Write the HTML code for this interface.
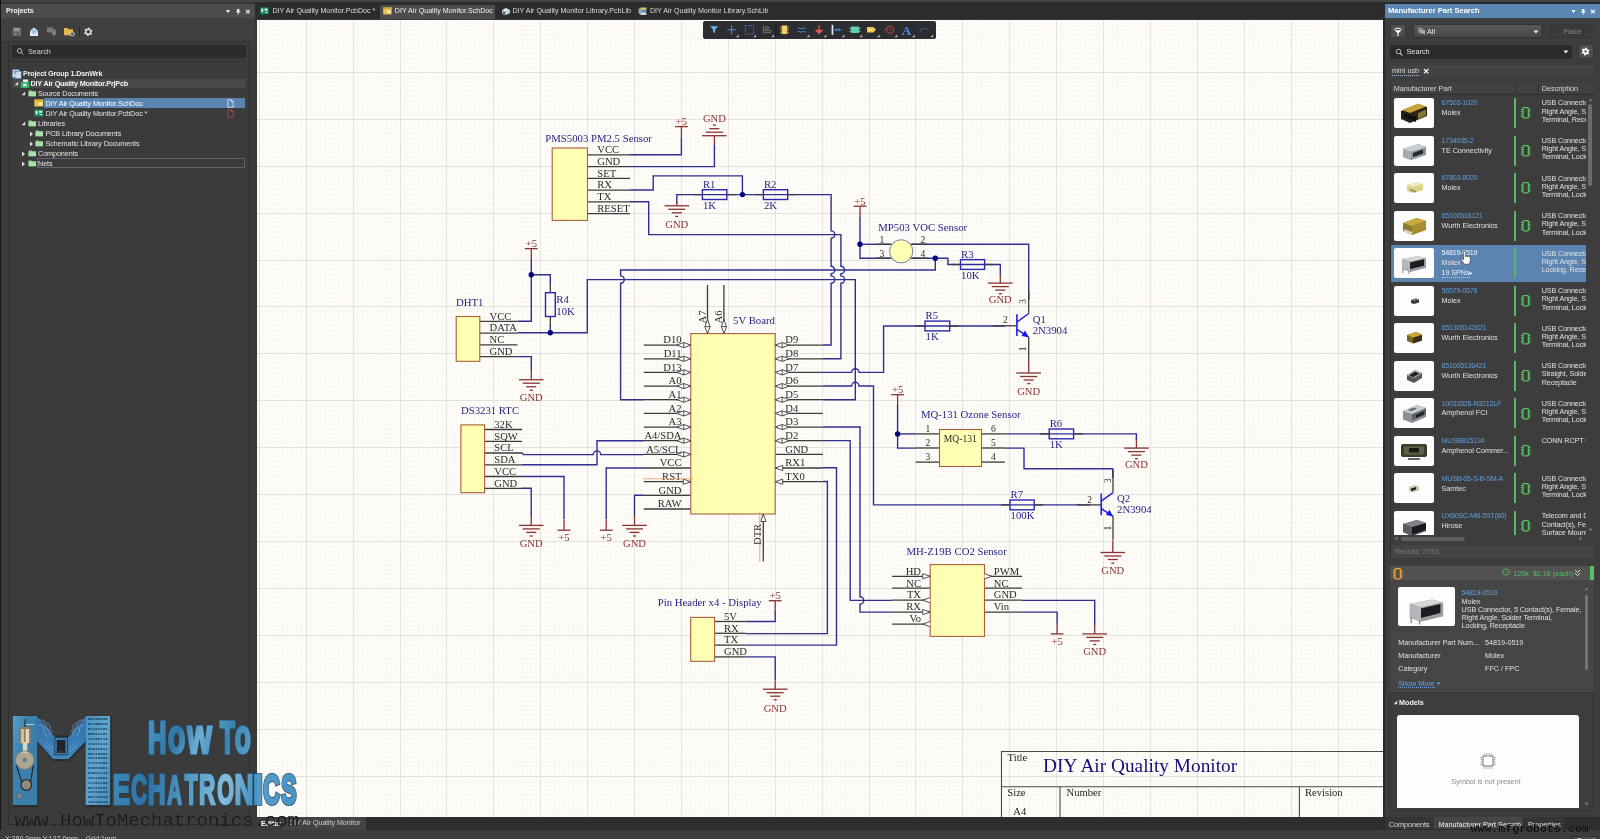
<!DOCTYPE html><html><head><meta charset="utf-8"><title>Altium</title><style>
*{box-sizing:border-box;margin:0;padding:0}
html,body{width:1600px;height:839px;overflow:hidden;background:#2d2d2d}
body{position:relative;will-change:transform;font-family:"Liberation Sans",sans-serif;font-size:7px;color:#ddd}
.a{position:absolute}
.t{position:absolute;white-space:nowrap;line-height:1}
svg{position:absolute;overflow:visible}
.sch text{font-family:"Liberation Serif",serif}
.sans text{font-family:"Liberation Sans",sans-serif}

.lp{left:1px;top:4px;width:253px;height:826px;background:#3b3b3b}
.lph{left:1px;top:4px;width:254px;height:14.3px;background:#4d4d4d}
.tr{font-size:7.25px;color:#e4e4e4;letter-spacing:-0.1px}
.tab{font-size:7.1px;color:#dcdcdc}

.rp{left:1384.5px;top:4px;width:215.5px;height:813px;background:#3d3d3d}
.rph{left:1384.5px;top:4px;width:215.5px;height:13.8px;background:#5b86b2}
.pn{font-size:7.2px;color:#5f9fe0;letter-spacing:-0.27px}
.mf{font-size:7.2px;color:#e2e2e2}
.ds{font-size:7.2px;letter-spacing:-0.1px;color:#e2e2e2;line-height:8.3px;white-space:nowrap;position:absolute}
</style></head><body>
<div class="a" style="left:0;top:0;width:1600px;height:4px;background:#2c2c2c"></div><div class="a" style="left:0;top:0;width:1600px;height:1.8px;background:#444"></div><div class="a" style="left:0;top:1.8px;width:255px;height:2.4px;background:#363636"></div>
<div class="a" style="left:0;top:0;width:1.2px;height:839px;background:#141414"></div>
<div class="a" style="left:257px;top:19px;width:1126px;height:798px;background:#fefcf8;overflow:hidden">
<svg class="sch" style="left:-257px;top:-19px" width="1600" height="839" viewBox="0 0 1600 839">
<line x1="259.50" y1="19" x2="259.50" y2="817" stroke="#e4e0da" stroke-width="1"/>
<line x1="264.04" y1="19" x2="264.04" y2="817" stroke="#f8f5f0" stroke-width="0.5"/>
<line x1="268.73" y1="19" x2="268.73" y2="817" stroke="#f8f5f0" stroke-width="0.5"/>
<line x1="273.42" y1="19" x2="273.42" y2="817" stroke="#f8f5f0" stroke-width="0.5"/>
<line x1="278.11" y1="19" x2="278.11" y2="817" stroke="#f8f5f0" stroke-width="0.5"/>
<line x1="282.80" y1="19" x2="282.80" y2="817" stroke="#f8f5f0" stroke-width="0.5"/>
<line x1="287.49" y1="19" x2="287.49" y2="817" stroke="#f8f5f0" stroke-width="0.5"/>
<line x1="292.18" y1="19" x2="292.18" y2="817" stroke="#f8f5f0" stroke-width="0.5"/>
<line x1="296.87" y1="19" x2="296.87" y2="817" stroke="#f8f5f0" stroke-width="0.5"/>
<line x1="301.56" y1="19" x2="301.56" y2="817" stroke="#f8f5f0" stroke-width="0.5"/>
<line x1="306.50" y1="19" x2="306.50" y2="817" stroke="#e4e0da" stroke-width="1"/>
<line x1="310.94" y1="19" x2="310.94" y2="817" stroke="#f8f5f0" stroke-width="0.5"/>
<line x1="315.63" y1="19" x2="315.63" y2="817" stroke="#f8f5f0" stroke-width="0.5"/>
<line x1="320.32" y1="19" x2="320.32" y2="817" stroke="#f8f5f0" stroke-width="0.5"/>
<line x1="325.01" y1="19" x2="325.01" y2="817" stroke="#f8f5f0" stroke-width="0.5"/>
<line x1="329.70" y1="19" x2="329.70" y2="817" stroke="#f8f5f0" stroke-width="0.5"/>
<line x1="334.39" y1="19" x2="334.39" y2="817" stroke="#f8f5f0" stroke-width="0.5"/>
<line x1="339.08" y1="19" x2="339.08" y2="817" stroke="#f8f5f0" stroke-width="0.5"/>
<line x1="343.77" y1="19" x2="343.77" y2="817" stroke="#f8f5f0" stroke-width="0.5"/>
<line x1="348.46" y1="19" x2="348.46" y2="817" stroke="#f8f5f0" stroke-width="0.5"/>
<line x1="353.50" y1="19" x2="353.50" y2="817" stroke="#e4e0da" stroke-width="1"/>
<line x1="357.84" y1="19" x2="357.84" y2="817" stroke="#f8f5f0" stroke-width="0.5"/>
<line x1="362.53" y1="19" x2="362.53" y2="817" stroke="#f8f5f0" stroke-width="0.5"/>
<line x1="367.22" y1="19" x2="367.22" y2="817" stroke="#f8f5f0" stroke-width="0.5"/>
<line x1="371.91" y1="19" x2="371.91" y2="817" stroke="#f8f5f0" stroke-width="0.5"/>
<line x1="376.60" y1="19" x2="376.60" y2="817" stroke="#f8f5f0" stroke-width="0.5"/>
<line x1="381.29" y1="19" x2="381.29" y2="817" stroke="#f8f5f0" stroke-width="0.5"/>
<line x1="385.98" y1="19" x2="385.98" y2="817" stroke="#f8f5f0" stroke-width="0.5"/>
<line x1="390.67" y1="19" x2="390.67" y2="817" stroke="#f8f5f0" stroke-width="0.5"/>
<line x1="395.36" y1="19" x2="395.36" y2="817" stroke="#f8f5f0" stroke-width="0.5"/>
<line x1="400.50" y1="19" x2="400.50" y2="817" stroke="#e4e0da" stroke-width="1"/>
<line x1="404.74" y1="19" x2="404.74" y2="817" stroke="#f8f5f0" stroke-width="0.5"/>
<line x1="409.43" y1="19" x2="409.43" y2="817" stroke="#f8f5f0" stroke-width="0.5"/>
<line x1="414.12" y1="19" x2="414.12" y2="817" stroke="#f8f5f0" stroke-width="0.5"/>
<line x1="418.81" y1="19" x2="418.81" y2="817" stroke="#f8f5f0" stroke-width="0.5"/>
<line x1="423.50" y1="19" x2="423.50" y2="817" stroke="#f8f5f0" stroke-width="0.5"/>
<line x1="428.19" y1="19" x2="428.19" y2="817" stroke="#f8f5f0" stroke-width="0.5"/>
<line x1="432.88" y1="19" x2="432.88" y2="817" stroke="#f8f5f0" stroke-width="0.5"/>
<line x1="437.57" y1="19" x2="437.57" y2="817" stroke="#f8f5f0" stroke-width="0.5"/>
<line x1="442.26" y1="19" x2="442.26" y2="817" stroke="#f8f5f0" stroke-width="0.5"/>
<line x1="446.50" y1="19" x2="446.50" y2="817" stroke="#e4e0da" stroke-width="1"/>
<line x1="451.64" y1="19" x2="451.64" y2="817" stroke="#f8f5f0" stroke-width="0.5"/>
<line x1="456.33" y1="19" x2="456.33" y2="817" stroke="#f8f5f0" stroke-width="0.5"/>
<line x1="461.02" y1="19" x2="461.02" y2="817" stroke="#f8f5f0" stroke-width="0.5"/>
<line x1="465.71" y1="19" x2="465.71" y2="817" stroke="#f8f5f0" stroke-width="0.5"/>
<line x1="470.40" y1="19" x2="470.40" y2="817" stroke="#f8f5f0" stroke-width="0.5"/>
<line x1="475.09" y1="19" x2="475.09" y2="817" stroke="#f8f5f0" stroke-width="0.5"/>
<line x1="479.78" y1="19" x2="479.78" y2="817" stroke="#f8f5f0" stroke-width="0.5"/>
<line x1="484.47" y1="19" x2="484.47" y2="817" stroke="#f8f5f0" stroke-width="0.5"/>
<line x1="489.16" y1="19" x2="489.16" y2="817" stroke="#f8f5f0" stroke-width="0.5"/>
<line x1="493.50" y1="19" x2="493.50" y2="817" stroke="#e4e0da" stroke-width="1"/>
<line x1="498.54" y1="19" x2="498.54" y2="817" stroke="#f8f5f0" stroke-width="0.5"/>
<line x1="503.23" y1="19" x2="503.23" y2="817" stroke="#f8f5f0" stroke-width="0.5"/>
<line x1="507.92" y1="19" x2="507.92" y2="817" stroke="#f8f5f0" stroke-width="0.5"/>
<line x1="512.61" y1="19" x2="512.61" y2="817" stroke="#f8f5f0" stroke-width="0.5"/>
<line x1="517.30" y1="19" x2="517.30" y2="817" stroke="#f8f5f0" stroke-width="0.5"/>
<line x1="521.99" y1="19" x2="521.99" y2="817" stroke="#f8f5f0" stroke-width="0.5"/>
<line x1="526.68" y1="19" x2="526.68" y2="817" stroke="#f8f5f0" stroke-width="0.5"/>
<line x1="531.37" y1="19" x2="531.37" y2="817" stroke="#f8f5f0" stroke-width="0.5"/>
<line x1="536.06" y1="19" x2="536.06" y2="817" stroke="#f8f5f0" stroke-width="0.5"/>
<line x1="540.50" y1="19" x2="540.50" y2="817" stroke="#e4e0da" stroke-width="1"/>
<line x1="545.44" y1="19" x2="545.44" y2="817" stroke="#f8f5f0" stroke-width="0.5"/>
<line x1="550.13" y1="19" x2="550.13" y2="817" stroke="#f8f5f0" stroke-width="0.5"/>
<line x1="554.82" y1="19" x2="554.82" y2="817" stroke="#f8f5f0" stroke-width="0.5"/>
<line x1="559.51" y1="19" x2="559.51" y2="817" stroke="#f8f5f0" stroke-width="0.5"/>
<line x1="564.20" y1="19" x2="564.20" y2="817" stroke="#f8f5f0" stroke-width="0.5"/>
<line x1="568.89" y1="19" x2="568.89" y2="817" stroke="#f8f5f0" stroke-width="0.5"/>
<line x1="573.58" y1="19" x2="573.58" y2="817" stroke="#f8f5f0" stroke-width="0.5"/>
<line x1="578.27" y1="19" x2="578.27" y2="817" stroke="#f8f5f0" stroke-width="0.5"/>
<line x1="582.96" y1="19" x2="582.96" y2="817" stroke="#f8f5f0" stroke-width="0.5"/>
<line x1="587.50" y1="19" x2="587.50" y2="817" stroke="#e4e0da" stroke-width="1"/>
<line x1="592.34" y1="19" x2="592.34" y2="817" stroke="#f8f5f0" stroke-width="0.5"/>
<line x1="597.03" y1="19" x2="597.03" y2="817" stroke="#f8f5f0" stroke-width="0.5"/>
<line x1="601.72" y1="19" x2="601.72" y2="817" stroke="#f8f5f0" stroke-width="0.5"/>
<line x1="606.41" y1="19" x2="606.41" y2="817" stroke="#f8f5f0" stroke-width="0.5"/>
<line x1="611.10" y1="19" x2="611.10" y2="817" stroke="#f8f5f0" stroke-width="0.5"/>
<line x1="615.79" y1="19" x2="615.79" y2="817" stroke="#f8f5f0" stroke-width="0.5"/>
<line x1="620.48" y1="19" x2="620.48" y2="817" stroke="#f8f5f0" stroke-width="0.5"/>
<line x1="625.17" y1="19" x2="625.17" y2="817" stroke="#f8f5f0" stroke-width="0.5"/>
<line x1="629.86" y1="19" x2="629.86" y2="817" stroke="#f8f5f0" stroke-width="0.5"/>
<line x1="634.50" y1="19" x2="634.50" y2="817" stroke="#e4e0da" stroke-width="1"/>
<line x1="639.24" y1="19" x2="639.24" y2="817" stroke="#f8f5f0" stroke-width="0.5"/>
<line x1="643.93" y1="19" x2="643.93" y2="817" stroke="#f8f5f0" stroke-width="0.5"/>
<line x1="648.62" y1="19" x2="648.62" y2="817" stroke="#f8f5f0" stroke-width="0.5"/>
<line x1="653.31" y1="19" x2="653.31" y2="817" stroke="#f8f5f0" stroke-width="0.5"/>
<line x1="658.00" y1="19" x2="658.00" y2="817" stroke="#f8f5f0" stroke-width="0.5"/>
<line x1="662.69" y1="19" x2="662.69" y2="817" stroke="#f8f5f0" stroke-width="0.5"/>
<line x1="667.38" y1="19" x2="667.38" y2="817" stroke="#f8f5f0" stroke-width="0.5"/>
<line x1="672.07" y1="19" x2="672.07" y2="817" stroke="#f8f5f0" stroke-width="0.5"/>
<line x1="676.76" y1="19" x2="676.76" y2="817" stroke="#f8f5f0" stroke-width="0.5"/>
<line x1="681.50" y1="19" x2="681.50" y2="817" stroke="#e4e0da" stroke-width="1"/>
<line x1="686.14" y1="19" x2="686.14" y2="817" stroke="#f8f5f0" stroke-width="0.5"/>
<line x1="690.83" y1="19" x2="690.83" y2="817" stroke="#f8f5f0" stroke-width="0.5"/>
<line x1="695.52" y1="19" x2="695.52" y2="817" stroke="#f8f5f0" stroke-width="0.5"/>
<line x1="700.21" y1="19" x2="700.21" y2="817" stroke="#f8f5f0" stroke-width="0.5"/>
<line x1="704.90" y1="19" x2="704.90" y2="817" stroke="#f8f5f0" stroke-width="0.5"/>
<line x1="709.59" y1="19" x2="709.59" y2="817" stroke="#f8f5f0" stroke-width="0.5"/>
<line x1="714.28" y1="19" x2="714.28" y2="817" stroke="#f8f5f0" stroke-width="0.5"/>
<line x1="718.97" y1="19" x2="718.97" y2="817" stroke="#f8f5f0" stroke-width="0.5"/>
<line x1="723.66" y1="19" x2="723.66" y2="817" stroke="#f8f5f0" stroke-width="0.5"/>
<line x1="728.50" y1="19" x2="728.50" y2="817" stroke="#e4e0da" stroke-width="1"/>
<line x1="733.04" y1="19" x2="733.04" y2="817" stroke="#f8f5f0" stroke-width="0.5"/>
<line x1="737.73" y1="19" x2="737.73" y2="817" stroke="#f8f5f0" stroke-width="0.5"/>
<line x1="742.42" y1="19" x2="742.42" y2="817" stroke="#f8f5f0" stroke-width="0.5"/>
<line x1="747.11" y1="19" x2="747.11" y2="817" stroke="#f8f5f0" stroke-width="0.5"/>
<line x1="751.80" y1="19" x2="751.80" y2="817" stroke="#f8f5f0" stroke-width="0.5"/>
<line x1="756.49" y1="19" x2="756.49" y2="817" stroke="#f8f5f0" stroke-width="0.5"/>
<line x1="761.18" y1="19" x2="761.18" y2="817" stroke="#f8f5f0" stroke-width="0.5"/>
<line x1="765.87" y1="19" x2="765.87" y2="817" stroke="#f8f5f0" stroke-width="0.5"/>
<line x1="770.56" y1="19" x2="770.56" y2="817" stroke="#f8f5f0" stroke-width="0.5"/>
<line x1="775.50" y1="19" x2="775.50" y2="817" stroke="#e4e0da" stroke-width="1"/>
<line x1="779.94" y1="19" x2="779.94" y2="817" stroke="#f8f5f0" stroke-width="0.5"/>
<line x1="784.63" y1="19" x2="784.63" y2="817" stroke="#f8f5f0" stroke-width="0.5"/>
<line x1="789.32" y1="19" x2="789.32" y2="817" stroke="#f8f5f0" stroke-width="0.5"/>
<line x1="794.01" y1="19" x2="794.01" y2="817" stroke="#f8f5f0" stroke-width="0.5"/>
<line x1="798.70" y1="19" x2="798.70" y2="817" stroke="#f8f5f0" stroke-width="0.5"/>
<line x1="803.39" y1="19" x2="803.39" y2="817" stroke="#f8f5f0" stroke-width="0.5"/>
<line x1="808.08" y1="19" x2="808.08" y2="817" stroke="#f8f5f0" stroke-width="0.5"/>
<line x1="812.77" y1="19" x2="812.77" y2="817" stroke="#f8f5f0" stroke-width="0.5"/>
<line x1="817.46" y1="19" x2="817.46" y2="817" stroke="#f8f5f0" stroke-width="0.5"/>
<line x1="822.50" y1="19" x2="822.50" y2="817" stroke="#e4e0da" stroke-width="1"/>
<line x1="826.84" y1="19" x2="826.84" y2="817" stroke="#f8f5f0" stroke-width="0.5"/>
<line x1="831.53" y1="19" x2="831.53" y2="817" stroke="#f8f5f0" stroke-width="0.5"/>
<line x1="836.22" y1="19" x2="836.22" y2="817" stroke="#f8f5f0" stroke-width="0.5"/>
<line x1="840.91" y1="19" x2="840.91" y2="817" stroke="#f8f5f0" stroke-width="0.5"/>
<line x1="845.60" y1="19" x2="845.60" y2="817" stroke="#f8f5f0" stroke-width="0.5"/>
<line x1="850.29" y1="19" x2="850.29" y2="817" stroke="#f8f5f0" stroke-width="0.5"/>
<line x1="854.98" y1="19" x2="854.98" y2="817" stroke="#f8f5f0" stroke-width="0.5"/>
<line x1="859.67" y1="19" x2="859.67" y2="817" stroke="#f8f5f0" stroke-width="0.5"/>
<line x1="864.36" y1="19" x2="864.36" y2="817" stroke="#f8f5f0" stroke-width="0.5"/>
<line x1="869.50" y1="19" x2="869.50" y2="817" stroke="#e4e0da" stroke-width="1"/>
<line x1="873.74" y1="19" x2="873.74" y2="817" stroke="#f8f5f0" stroke-width="0.5"/>
<line x1="878.43" y1="19" x2="878.43" y2="817" stroke="#f8f5f0" stroke-width="0.5"/>
<line x1="883.12" y1="19" x2="883.12" y2="817" stroke="#f8f5f0" stroke-width="0.5"/>
<line x1="887.81" y1="19" x2="887.81" y2="817" stroke="#f8f5f0" stroke-width="0.5"/>
<line x1="892.50" y1="19" x2="892.50" y2="817" stroke="#f8f5f0" stroke-width="0.5"/>
<line x1="897.19" y1="19" x2="897.19" y2="817" stroke="#f8f5f0" stroke-width="0.5"/>
<line x1="901.88" y1="19" x2="901.88" y2="817" stroke="#f8f5f0" stroke-width="0.5"/>
<line x1="906.57" y1="19" x2="906.57" y2="817" stroke="#f8f5f0" stroke-width="0.5"/>
<line x1="911.26" y1="19" x2="911.26" y2="817" stroke="#f8f5f0" stroke-width="0.5"/>
<line x1="915.50" y1="19" x2="915.50" y2="817" stroke="#e4e0da" stroke-width="1"/>
<line x1="920.64" y1="19" x2="920.64" y2="817" stroke="#f8f5f0" stroke-width="0.5"/>
<line x1="925.33" y1="19" x2="925.33" y2="817" stroke="#f8f5f0" stroke-width="0.5"/>
<line x1="930.02" y1="19" x2="930.02" y2="817" stroke="#f8f5f0" stroke-width="0.5"/>
<line x1="934.71" y1="19" x2="934.71" y2="817" stroke="#f8f5f0" stroke-width="0.5"/>
<line x1="939.40" y1="19" x2="939.40" y2="817" stroke="#f8f5f0" stroke-width="0.5"/>
<line x1="944.09" y1="19" x2="944.09" y2="817" stroke="#f8f5f0" stroke-width="0.5"/>
<line x1="948.78" y1="19" x2="948.78" y2="817" stroke="#f8f5f0" stroke-width="0.5"/>
<line x1="953.47" y1="19" x2="953.47" y2="817" stroke="#f8f5f0" stroke-width="0.5"/>
<line x1="958.16" y1="19" x2="958.16" y2="817" stroke="#f8f5f0" stroke-width="0.5"/>
<line x1="962.50" y1="19" x2="962.50" y2="817" stroke="#e4e0da" stroke-width="1"/>
<line x1="967.54" y1="19" x2="967.54" y2="817" stroke="#f8f5f0" stroke-width="0.5"/>
<line x1="972.23" y1="19" x2="972.23" y2="817" stroke="#f8f5f0" stroke-width="0.5"/>
<line x1="976.92" y1="19" x2="976.92" y2="817" stroke="#f8f5f0" stroke-width="0.5"/>
<line x1="981.61" y1="19" x2="981.61" y2="817" stroke="#f8f5f0" stroke-width="0.5"/>
<line x1="986.30" y1="19" x2="986.30" y2="817" stroke="#f8f5f0" stroke-width="0.5"/>
<line x1="990.99" y1="19" x2="990.99" y2="817" stroke="#f8f5f0" stroke-width="0.5"/>
<line x1="995.68" y1="19" x2="995.68" y2="817" stroke="#f8f5f0" stroke-width="0.5"/>
<line x1="1000.37" y1="19" x2="1000.37" y2="817" stroke="#f8f5f0" stroke-width="0.5"/>
<line x1="1005.06" y1="19" x2="1005.06" y2="817" stroke="#f8f5f0" stroke-width="0.5"/>
<line x1="1009.50" y1="19" x2="1009.50" y2="817" stroke="#e4e0da" stroke-width="1"/>
<line x1="1014.44" y1="19" x2="1014.44" y2="817" stroke="#f8f5f0" stroke-width="0.5"/>
<line x1="1019.13" y1="19" x2="1019.13" y2="817" stroke="#f8f5f0" stroke-width="0.5"/>
<line x1="1023.82" y1="19" x2="1023.82" y2="817" stroke="#f8f5f0" stroke-width="0.5"/>
<line x1="1028.51" y1="19" x2="1028.51" y2="817" stroke="#f8f5f0" stroke-width="0.5"/>
<line x1="1033.20" y1="19" x2="1033.20" y2="817" stroke="#f8f5f0" stroke-width="0.5"/>
<line x1="1037.89" y1="19" x2="1037.89" y2="817" stroke="#f8f5f0" stroke-width="0.5"/>
<line x1="1042.58" y1="19" x2="1042.58" y2="817" stroke="#f8f5f0" stroke-width="0.5"/>
<line x1="1047.27" y1="19" x2="1047.27" y2="817" stroke="#f8f5f0" stroke-width="0.5"/>
<line x1="1051.96" y1="19" x2="1051.96" y2="817" stroke="#f8f5f0" stroke-width="0.5"/>
<line x1="1056.50" y1="19" x2="1056.50" y2="817" stroke="#e4e0da" stroke-width="1"/>
<line x1="1061.34" y1="19" x2="1061.34" y2="817" stroke="#f8f5f0" stroke-width="0.5"/>
<line x1="1066.03" y1="19" x2="1066.03" y2="817" stroke="#f8f5f0" stroke-width="0.5"/>
<line x1="1070.72" y1="19" x2="1070.72" y2="817" stroke="#f8f5f0" stroke-width="0.5"/>
<line x1="1075.41" y1="19" x2="1075.41" y2="817" stroke="#f8f5f0" stroke-width="0.5"/>
<line x1="1080.10" y1="19" x2="1080.10" y2="817" stroke="#f8f5f0" stroke-width="0.5"/>
<line x1="1084.79" y1="19" x2="1084.79" y2="817" stroke="#f8f5f0" stroke-width="0.5"/>
<line x1="1089.48" y1="19" x2="1089.48" y2="817" stroke="#f8f5f0" stroke-width="0.5"/>
<line x1="1094.17" y1="19" x2="1094.17" y2="817" stroke="#f8f5f0" stroke-width="0.5"/>
<line x1="1098.86" y1="19" x2="1098.86" y2="817" stroke="#f8f5f0" stroke-width="0.5"/>
<line x1="1103.50" y1="19" x2="1103.50" y2="817" stroke="#e4e0da" stroke-width="1"/>
<line x1="1108.24" y1="19" x2="1108.24" y2="817" stroke="#f8f5f0" stroke-width="0.5"/>
<line x1="1112.93" y1="19" x2="1112.93" y2="817" stroke="#f8f5f0" stroke-width="0.5"/>
<line x1="1117.62" y1="19" x2="1117.62" y2="817" stroke="#f8f5f0" stroke-width="0.5"/>
<line x1="1122.31" y1="19" x2="1122.31" y2="817" stroke="#f8f5f0" stroke-width="0.5"/>
<line x1="1127.00" y1="19" x2="1127.00" y2="817" stroke="#f8f5f0" stroke-width="0.5"/>
<line x1="1131.69" y1="19" x2="1131.69" y2="817" stroke="#f8f5f0" stroke-width="0.5"/>
<line x1="1136.38" y1="19" x2="1136.38" y2="817" stroke="#f8f5f0" stroke-width="0.5"/>
<line x1="1141.07" y1="19" x2="1141.07" y2="817" stroke="#f8f5f0" stroke-width="0.5"/>
<line x1="1145.76" y1="19" x2="1145.76" y2="817" stroke="#f8f5f0" stroke-width="0.5"/>
<line x1="1150.50" y1="19" x2="1150.50" y2="817" stroke="#e4e0da" stroke-width="1"/>
<line x1="1155.14" y1="19" x2="1155.14" y2="817" stroke="#f8f5f0" stroke-width="0.5"/>
<line x1="1159.83" y1="19" x2="1159.83" y2="817" stroke="#f8f5f0" stroke-width="0.5"/>
<line x1="1164.52" y1="19" x2="1164.52" y2="817" stroke="#f8f5f0" stroke-width="0.5"/>
<line x1="1169.21" y1="19" x2="1169.21" y2="817" stroke="#f8f5f0" stroke-width="0.5"/>
<line x1="1173.90" y1="19" x2="1173.90" y2="817" stroke="#f8f5f0" stroke-width="0.5"/>
<line x1="1178.59" y1="19" x2="1178.59" y2="817" stroke="#f8f5f0" stroke-width="0.5"/>
<line x1="1183.28" y1="19" x2="1183.28" y2="817" stroke="#f8f5f0" stroke-width="0.5"/>
<line x1="1187.97" y1="19" x2="1187.97" y2="817" stroke="#f8f5f0" stroke-width="0.5"/>
<line x1="1192.66" y1="19" x2="1192.66" y2="817" stroke="#f8f5f0" stroke-width="0.5"/>
<line x1="1197.50" y1="19" x2="1197.50" y2="817" stroke="#e4e0da" stroke-width="1"/>
<line x1="1202.04" y1="19" x2="1202.04" y2="817" stroke="#f8f5f0" stroke-width="0.5"/>
<line x1="1206.73" y1="19" x2="1206.73" y2="817" stroke="#f8f5f0" stroke-width="0.5"/>
<line x1="1211.42" y1="19" x2="1211.42" y2="817" stroke="#f8f5f0" stroke-width="0.5"/>
<line x1="1216.11" y1="19" x2="1216.11" y2="817" stroke="#f8f5f0" stroke-width="0.5"/>
<line x1="1220.80" y1="19" x2="1220.80" y2="817" stroke="#f8f5f0" stroke-width="0.5"/>
<line x1="1225.49" y1="19" x2="1225.49" y2="817" stroke="#f8f5f0" stroke-width="0.5"/>
<line x1="1230.18" y1="19" x2="1230.18" y2="817" stroke="#f8f5f0" stroke-width="0.5"/>
<line x1="1234.87" y1="19" x2="1234.87" y2="817" stroke="#f8f5f0" stroke-width="0.5"/>
<line x1="1239.56" y1="19" x2="1239.56" y2="817" stroke="#f8f5f0" stroke-width="0.5"/>
<line x1="1244.50" y1="19" x2="1244.50" y2="817" stroke="#e4e0da" stroke-width="1"/>
<line x1="1248.94" y1="19" x2="1248.94" y2="817" stroke="#f8f5f0" stroke-width="0.5"/>
<line x1="1253.63" y1="19" x2="1253.63" y2="817" stroke="#f8f5f0" stroke-width="0.5"/>
<line x1="1258.32" y1="19" x2="1258.32" y2="817" stroke="#f8f5f0" stroke-width="0.5"/>
<line x1="1263.01" y1="19" x2="1263.01" y2="817" stroke="#f8f5f0" stroke-width="0.5"/>
<line x1="1267.70" y1="19" x2="1267.70" y2="817" stroke="#f8f5f0" stroke-width="0.5"/>
<line x1="1272.39" y1="19" x2="1272.39" y2="817" stroke="#f8f5f0" stroke-width="0.5"/>
<line x1="1277.08" y1="19" x2="1277.08" y2="817" stroke="#f8f5f0" stroke-width="0.5"/>
<line x1="1281.77" y1="19" x2="1281.77" y2="817" stroke="#f8f5f0" stroke-width="0.5"/>
<line x1="1286.46" y1="19" x2="1286.46" y2="817" stroke="#f8f5f0" stroke-width="0.5"/>
<line x1="1291.50" y1="19" x2="1291.50" y2="817" stroke="#e4e0da" stroke-width="1"/>
<line x1="1295.84" y1="19" x2="1295.84" y2="817" stroke="#f8f5f0" stroke-width="0.5"/>
<line x1="1300.53" y1="19" x2="1300.53" y2="817" stroke="#f8f5f0" stroke-width="0.5"/>
<line x1="1305.22" y1="19" x2="1305.22" y2="817" stroke="#f8f5f0" stroke-width="0.5"/>
<line x1="1309.91" y1="19" x2="1309.91" y2="817" stroke="#f8f5f0" stroke-width="0.5"/>
<line x1="1314.60" y1="19" x2="1314.60" y2="817" stroke="#f8f5f0" stroke-width="0.5"/>
<line x1="1319.29" y1="19" x2="1319.29" y2="817" stroke="#f8f5f0" stroke-width="0.5"/>
<line x1="1323.98" y1="19" x2="1323.98" y2="817" stroke="#f8f5f0" stroke-width="0.5"/>
<line x1="1328.67" y1="19" x2="1328.67" y2="817" stroke="#f8f5f0" stroke-width="0.5"/>
<line x1="1333.36" y1="19" x2="1333.36" y2="817" stroke="#f8f5f0" stroke-width="0.5"/>
<line x1="1338.50" y1="19" x2="1338.50" y2="817" stroke="#e4e0da" stroke-width="1"/>
<line x1="1342.74" y1="19" x2="1342.74" y2="817" stroke="#f8f5f0" stroke-width="0.5"/>
<line x1="1347.43" y1="19" x2="1347.43" y2="817" stroke="#f8f5f0" stroke-width="0.5"/>
<line x1="1352.12" y1="19" x2="1352.12" y2="817" stroke="#f8f5f0" stroke-width="0.5"/>
<line x1="1356.81" y1="19" x2="1356.81" y2="817" stroke="#f8f5f0" stroke-width="0.5"/>
<line x1="1361.50" y1="19" x2="1361.50" y2="817" stroke="#f8f5f0" stroke-width="0.5"/>
<line x1="1366.19" y1="19" x2="1366.19" y2="817" stroke="#f8f5f0" stroke-width="0.5"/>
<line x1="1370.88" y1="19" x2="1370.88" y2="817" stroke="#f8f5f0" stroke-width="0.5"/>
<line x1="1375.57" y1="19" x2="1375.57" y2="817" stroke="#f8f5f0" stroke-width="0.5"/>
<line x1="1380.26" y1="19" x2="1380.26" y2="817" stroke="#f8f5f0" stroke-width="0.5"/>
<line x1="257" y1="20.91" x2="1383" y2="20.91" stroke="#f8f5f0" stroke-width="0.5"/>
<line x1="257" y1="25.60" x2="1383" y2="25.60" stroke="#f8f5f0" stroke-width="0.5"/>
<line x1="257" y1="30.29" x2="1383" y2="30.29" stroke="#f8f5f0" stroke-width="0.5"/>
<line x1="257" y1="34.98" x2="1383" y2="34.98" stroke="#f8f5f0" stroke-width="0.5"/>
<line x1="257" y1="39.67" x2="1383" y2="39.67" stroke="#f8f5f0" stroke-width="0.5"/>
<line x1="257" y1="44.36" x2="1383" y2="44.36" stroke="#f8f5f0" stroke-width="0.5"/>
<line x1="257" y1="49.05" x2="1383" y2="49.05" stroke="#f8f5f0" stroke-width="0.5"/>
<line x1="257" y1="53.74" x2="1383" y2="53.74" stroke="#f8f5f0" stroke-width="0.5"/>
<line x1="257" y1="58.43" x2="1383" y2="58.43" stroke="#f8f5f0" stroke-width="0.5"/>
<line x1="257" y1="63.12" x2="1383" y2="63.12" stroke="#f8f5f0" stroke-width="0.5"/>
<line x1="257" y1="67.81" x2="1383" y2="67.81" stroke="#f8f5f0" stroke-width="0.5"/>
<line x1="257" y1="72.50" x2="1383" y2="72.50" stroke="#e4e0da" stroke-width="1"/>
<line x1="257" y1="77.19" x2="1383" y2="77.19" stroke="#f8f5f0" stroke-width="0.5"/>
<line x1="257" y1="81.88" x2="1383" y2="81.88" stroke="#f8f5f0" stroke-width="0.5"/>
<line x1="257" y1="86.57" x2="1383" y2="86.57" stroke="#f8f5f0" stroke-width="0.5"/>
<line x1="257" y1="91.26" x2="1383" y2="91.26" stroke="#f8f5f0" stroke-width="0.5"/>
<line x1="257" y1="95.95" x2="1383" y2="95.95" stroke="#f8f5f0" stroke-width="0.5"/>
<line x1="257" y1="100.64" x2="1383" y2="100.64" stroke="#f8f5f0" stroke-width="0.5"/>
<line x1="257" y1="105.33" x2="1383" y2="105.33" stroke="#f8f5f0" stroke-width="0.5"/>
<line x1="257" y1="110.02" x2="1383" y2="110.02" stroke="#f8f5f0" stroke-width="0.5"/>
<line x1="257" y1="114.71" x2="1383" y2="114.71" stroke="#f8f5f0" stroke-width="0.5"/>
<line x1="257" y1="119.50" x2="1383" y2="119.50" stroke="#e4e0da" stroke-width="1"/>
<line x1="257" y1="124.09" x2="1383" y2="124.09" stroke="#f8f5f0" stroke-width="0.5"/>
<line x1="257" y1="128.78" x2="1383" y2="128.78" stroke="#f8f5f0" stroke-width="0.5"/>
<line x1="257" y1="133.47" x2="1383" y2="133.47" stroke="#f8f5f0" stroke-width="0.5"/>
<line x1="257" y1="138.16" x2="1383" y2="138.16" stroke="#f8f5f0" stroke-width="0.5"/>
<line x1="257" y1="142.85" x2="1383" y2="142.85" stroke="#f8f5f0" stroke-width="0.5"/>
<line x1="257" y1="147.54" x2="1383" y2="147.54" stroke="#f8f5f0" stroke-width="0.5"/>
<line x1="257" y1="152.23" x2="1383" y2="152.23" stroke="#f8f5f0" stroke-width="0.5"/>
<line x1="257" y1="156.92" x2="1383" y2="156.92" stroke="#f8f5f0" stroke-width="0.5"/>
<line x1="257" y1="161.61" x2="1383" y2="161.61" stroke="#f8f5f0" stroke-width="0.5"/>
<line x1="257" y1="166.50" x2="1383" y2="166.50" stroke="#e4e0da" stroke-width="1"/>
<line x1="257" y1="170.99" x2="1383" y2="170.99" stroke="#f8f5f0" stroke-width="0.5"/>
<line x1="257" y1="175.68" x2="1383" y2="175.68" stroke="#f8f5f0" stroke-width="0.5"/>
<line x1="257" y1="180.37" x2="1383" y2="180.37" stroke="#f8f5f0" stroke-width="0.5"/>
<line x1="257" y1="185.06" x2="1383" y2="185.06" stroke="#f8f5f0" stroke-width="0.5"/>
<line x1="257" y1="189.75" x2="1383" y2="189.75" stroke="#f8f5f0" stroke-width="0.5"/>
<line x1="257" y1="194.44" x2="1383" y2="194.44" stroke="#f8f5f0" stroke-width="0.5"/>
<line x1="257" y1="199.13" x2="1383" y2="199.13" stroke="#f8f5f0" stroke-width="0.5"/>
<line x1="257" y1="203.82" x2="1383" y2="203.82" stroke="#f8f5f0" stroke-width="0.5"/>
<line x1="257" y1="208.51" x2="1383" y2="208.51" stroke="#f8f5f0" stroke-width="0.5"/>
<line x1="257" y1="213.50" x2="1383" y2="213.50" stroke="#e4e0da" stroke-width="1"/>
<line x1="257" y1="217.89" x2="1383" y2="217.89" stroke="#f8f5f0" stroke-width="0.5"/>
<line x1="257" y1="222.58" x2="1383" y2="222.58" stroke="#f8f5f0" stroke-width="0.5"/>
<line x1="257" y1="227.27" x2="1383" y2="227.27" stroke="#f8f5f0" stroke-width="0.5"/>
<line x1="257" y1="231.96" x2="1383" y2="231.96" stroke="#f8f5f0" stroke-width="0.5"/>
<line x1="257" y1="236.65" x2="1383" y2="236.65" stroke="#f8f5f0" stroke-width="0.5"/>
<line x1="257" y1="241.34" x2="1383" y2="241.34" stroke="#f8f5f0" stroke-width="0.5"/>
<line x1="257" y1="246.03" x2="1383" y2="246.03" stroke="#f8f5f0" stroke-width="0.5"/>
<line x1="257" y1="250.72" x2="1383" y2="250.72" stroke="#f8f5f0" stroke-width="0.5"/>
<line x1="257" y1="255.41" x2="1383" y2="255.41" stroke="#f8f5f0" stroke-width="0.5"/>
<line x1="257" y1="260.50" x2="1383" y2="260.50" stroke="#e4e0da" stroke-width="1"/>
<line x1="257" y1="264.79" x2="1383" y2="264.79" stroke="#f8f5f0" stroke-width="0.5"/>
<line x1="257" y1="269.48" x2="1383" y2="269.48" stroke="#f8f5f0" stroke-width="0.5"/>
<line x1="257" y1="274.17" x2="1383" y2="274.17" stroke="#f8f5f0" stroke-width="0.5"/>
<line x1="257" y1="278.86" x2="1383" y2="278.86" stroke="#f8f5f0" stroke-width="0.5"/>
<line x1="257" y1="283.55" x2="1383" y2="283.55" stroke="#f8f5f0" stroke-width="0.5"/>
<line x1="257" y1="288.24" x2="1383" y2="288.24" stroke="#f8f5f0" stroke-width="0.5"/>
<line x1="257" y1="292.93" x2="1383" y2="292.93" stroke="#f8f5f0" stroke-width="0.5"/>
<line x1="257" y1="297.62" x2="1383" y2="297.62" stroke="#f8f5f0" stroke-width="0.5"/>
<line x1="257" y1="302.31" x2="1383" y2="302.31" stroke="#f8f5f0" stroke-width="0.5"/>
<line x1="257" y1="306.50" x2="1383" y2="306.50" stroke="#e4e0da" stroke-width="1"/>
<line x1="257" y1="311.69" x2="1383" y2="311.69" stroke="#f8f5f0" stroke-width="0.5"/>
<line x1="257" y1="316.38" x2="1383" y2="316.38" stroke="#f8f5f0" stroke-width="0.5"/>
<line x1="257" y1="321.07" x2="1383" y2="321.07" stroke="#f8f5f0" stroke-width="0.5"/>
<line x1="257" y1="325.76" x2="1383" y2="325.76" stroke="#f8f5f0" stroke-width="0.5"/>
<line x1="257" y1="330.45" x2="1383" y2="330.45" stroke="#f8f5f0" stroke-width="0.5"/>
<line x1="257" y1="335.14" x2="1383" y2="335.14" stroke="#f8f5f0" stroke-width="0.5"/>
<line x1="257" y1="339.83" x2="1383" y2="339.83" stroke="#f8f5f0" stroke-width="0.5"/>
<line x1="257" y1="344.52" x2="1383" y2="344.52" stroke="#f8f5f0" stroke-width="0.5"/>
<line x1="257" y1="349.21" x2="1383" y2="349.21" stroke="#f8f5f0" stroke-width="0.5"/>
<line x1="257" y1="353.50" x2="1383" y2="353.50" stroke="#e4e0da" stroke-width="1"/>
<line x1="257" y1="358.59" x2="1383" y2="358.59" stroke="#f8f5f0" stroke-width="0.5"/>
<line x1="257" y1="363.28" x2="1383" y2="363.28" stroke="#f8f5f0" stroke-width="0.5"/>
<line x1="257" y1="367.97" x2="1383" y2="367.97" stroke="#f8f5f0" stroke-width="0.5"/>
<line x1="257" y1="372.66" x2="1383" y2="372.66" stroke="#f8f5f0" stroke-width="0.5"/>
<line x1="257" y1="377.35" x2="1383" y2="377.35" stroke="#f8f5f0" stroke-width="0.5"/>
<line x1="257" y1="382.04" x2="1383" y2="382.04" stroke="#f8f5f0" stroke-width="0.5"/>
<line x1="257" y1="386.73" x2="1383" y2="386.73" stroke="#f8f5f0" stroke-width="0.5"/>
<line x1="257" y1="391.42" x2="1383" y2="391.42" stroke="#f8f5f0" stroke-width="0.5"/>
<line x1="257" y1="396.11" x2="1383" y2="396.11" stroke="#f8f5f0" stroke-width="0.5"/>
<line x1="257" y1="400.50" x2="1383" y2="400.50" stroke="#e4e0da" stroke-width="1"/>
<line x1="257" y1="405.49" x2="1383" y2="405.49" stroke="#f8f5f0" stroke-width="0.5"/>
<line x1="257" y1="410.18" x2="1383" y2="410.18" stroke="#f8f5f0" stroke-width="0.5"/>
<line x1="257" y1="414.87" x2="1383" y2="414.87" stroke="#f8f5f0" stroke-width="0.5"/>
<line x1="257" y1="419.56" x2="1383" y2="419.56" stroke="#f8f5f0" stroke-width="0.5"/>
<line x1="257" y1="424.25" x2="1383" y2="424.25" stroke="#f8f5f0" stroke-width="0.5"/>
<line x1="257" y1="428.94" x2="1383" y2="428.94" stroke="#f8f5f0" stroke-width="0.5"/>
<line x1="257" y1="433.63" x2="1383" y2="433.63" stroke="#f8f5f0" stroke-width="0.5"/>
<line x1="257" y1="438.32" x2="1383" y2="438.32" stroke="#f8f5f0" stroke-width="0.5"/>
<line x1="257" y1="443.01" x2="1383" y2="443.01" stroke="#f8f5f0" stroke-width="0.5"/>
<line x1="257" y1="447.50" x2="1383" y2="447.50" stroke="#e4e0da" stroke-width="1"/>
<line x1="257" y1="452.39" x2="1383" y2="452.39" stroke="#f8f5f0" stroke-width="0.5"/>
<line x1="257" y1="457.08" x2="1383" y2="457.08" stroke="#f8f5f0" stroke-width="0.5"/>
<line x1="257" y1="461.77" x2="1383" y2="461.77" stroke="#f8f5f0" stroke-width="0.5"/>
<line x1="257" y1="466.46" x2="1383" y2="466.46" stroke="#f8f5f0" stroke-width="0.5"/>
<line x1="257" y1="471.15" x2="1383" y2="471.15" stroke="#f8f5f0" stroke-width="0.5"/>
<line x1="257" y1="475.84" x2="1383" y2="475.84" stroke="#f8f5f0" stroke-width="0.5"/>
<line x1="257" y1="480.53" x2="1383" y2="480.53" stroke="#f8f5f0" stroke-width="0.5"/>
<line x1="257" y1="485.22" x2="1383" y2="485.22" stroke="#f8f5f0" stroke-width="0.5"/>
<line x1="257" y1="489.91" x2="1383" y2="489.91" stroke="#f8f5f0" stroke-width="0.5"/>
<line x1="257" y1="494.50" x2="1383" y2="494.50" stroke="#e4e0da" stroke-width="1"/>
<line x1="257" y1="499.29" x2="1383" y2="499.29" stroke="#f8f5f0" stroke-width="0.5"/>
<line x1="257" y1="503.98" x2="1383" y2="503.98" stroke="#f8f5f0" stroke-width="0.5"/>
<line x1="257" y1="508.67" x2="1383" y2="508.67" stroke="#f8f5f0" stroke-width="0.5"/>
<line x1="257" y1="513.36" x2="1383" y2="513.36" stroke="#f8f5f0" stroke-width="0.5"/>
<line x1="257" y1="518.05" x2="1383" y2="518.05" stroke="#f8f5f0" stroke-width="0.5"/>
<line x1="257" y1="522.74" x2="1383" y2="522.74" stroke="#f8f5f0" stroke-width="0.5"/>
<line x1="257" y1="527.43" x2="1383" y2="527.43" stroke="#f8f5f0" stroke-width="0.5"/>
<line x1="257" y1="532.12" x2="1383" y2="532.12" stroke="#f8f5f0" stroke-width="0.5"/>
<line x1="257" y1="536.81" x2="1383" y2="536.81" stroke="#f8f5f0" stroke-width="0.5"/>
<line x1="257" y1="541.50" x2="1383" y2="541.50" stroke="#e4e0da" stroke-width="1"/>
<line x1="257" y1="546.19" x2="1383" y2="546.19" stroke="#f8f5f0" stroke-width="0.5"/>
<line x1="257" y1="550.88" x2="1383" y2="550.88" stroke="#f8f5f0" stroke-width="0.5"/>
<line x1="257" y1="555.57" x2="1383" y2="555.57" stroke="#f8f5f0" stroke-width="0.5"/>
<line x1="257" y1="560.26" x2="1383" y2="560.26" stroke="#f8f5f0" stroke-width="0.5"/>
<line x1="257" y1="564.95" x2="1383" y2="564.95" stroke="#f8f5f0" stroke-width="0.5"/>
<line x1="257" y1="569.64" x2="1383" y2="569.64" stroke="#f8f5f0" stroke-width="0.5"/>
<line x1="257" y1="574.33" x2="1383" y2="574.33" stroke="#f8f5f0" stroke-width="0.5"/>
<line x1="257" y1="579.02" x2="1383" y2="579.02" stroke="#f8f5f0" stroke-width="0.5"/>
<line x1="257" y1="583.71" x2="1383" y2="583.71" stroke="#f8f5f0" stroke-width="0.5"/>
<line x1="257" y1="588.50" x2="1383" y2="588.50" stroke="#e4e0da" stroke-width="1"/>
<line x1="257" y1="593.09" x2="1383" y2="593.09" stroke="#f8f5f0" stroke-width="0.5"/>
<line x1="257" y1="597.78" x2="1383" y2="597.78" stroke="#f8f5f0" stroke-width="0.5"/>
<line x1="257" y1="602.47" x2="1383" y2="602.47" stroke="#f8f5f0" stroke-width="0.5"/>
<line x1="257" y1="607.16" x2="1383" y2="607.16" stroke="#f8f5f0" stroke-width="0.5"/>
<line x1="257" y1="611.85" x2="1383" y2="611.85" stroke="#f8f5f0" stroke-width="0.5"/>
<line x1="257" y1="616.54" x2="1383" y2="616.54" stroke="#f8f5f0" stroke-width="0.5"/>
<line x1="257" y1="621.23" x2="1383" y2="621.23" stroke="#f8f5f0" stroke-width="0.5"/>
<line x1="257" y1="625.92" x2="1383" y2="625.92" stroke="#f8f5f0" stroke-width="0.5"/>
<line x1="257" y1="630.61" x2="1383" y2="630.61" stroke="#f8f5f0" stroke-width="0.5"/>
<line x1="257" y1="635.50" x2="1383" y2="635.50" stroke="#e4e0da" stroke-width="1"/>
<line x1="257" y1="639.99" x2="1383" y2="639.99" stroke="#f8f5f0" stroke-width="0.5"/>
<line x1="257" y1="644.68" x2="1383" y2="644.68" stroke="#f8f5f0" stroke-width="0.5"/>
<line x1="257" y1="649.37" x2="1383" y2="649.37" stroke="#f8f5f0" stroke-width="0.5"/>
<line x1="257" y1="654.06" x2="1383" y2="654.06" stroke="#f8f5f0" stroke-width="0.5"/>
<line x1="257" y1="658.75" x2="1383" y2="658.75" stroke="#f8f5f0" stroke-width="0.5"/>
<line x1="257" y1="663.44" x2="1383" y2="663.44" stroke="#f8f5f0" stroke-width="0.5"/>
<line x1="257" y1="668.13" x2="1383" y2="668.13" stroke="#f8f5f0" stroke-width="0.5"/>
<line x1="257" y1="672.82" x2="1383" y2="672.82" stroke="#f8f5f0" stroke-width="0.5"/>
<line x1="257" y1="677.51" x2="1383" y2="677.51" stroke="#f8f5f0" stroke-width="0.5"/>
<line x1="257" y1="682.50" x2="1383" y2="682.50" stroke="#e4e0da" stroke-width="1"/>
<line x1="257" y1="686.89" x2="1383" y2="686.89" stroke="#f8f5f0" stroke-width="0.5"/>
<line x1="257" y1="691.58" x2="1383" y2="691.58" stroke="#f8f5f0" stroke-width="0.5"/>
<line x1="257" y1="696.27" x2="1383" y2="696.27" stroke="#f8f5f0" stroke-width="0.5"/>
<line x1="257" y1="700.96" x2="1383" y2="700.96" stroke="#f8f5f0" stroke-width="0.5"/>
<line x1="257" y1="705.65" x2="1383" y2="705.65" stroke="#f8f5f0" stroke-width="0.5"/>
<line x1="257" y1="710.34" x2="1383" y2="710.34" stroke="#f8f5f0" stroke-width="0.5"/>
<line x1="257" y1="715.03" x2="1383" y2="715.03" stroke="#f8f5f0" stroke-width="0.5"/>
<line x1="257" y1="719.72" x2="1383" y2="719.72" stroke="#f8f5f0" stroke-width="0.5"/>
<line x1="257" y1="724.41" x2="1383" y2="724.41" stroke="#f8f5f0" stroke-width="0.5"/>
<line x1="257" y1="729.50" x2="1383" y2="729.50" stroke="#e4e0da" stroke-width="1"/>
<line x1="257" y1="733.79" x2="1383" y2="733.79" stroke="#f8f5f0" stroke-width="0.5"/>
<line x1="257" y1="738.48" x2="1383" y2="738.48" stroke="#f8f5f0" stroke-width="0.5"/>
<line x1="257" y1="743.17" x2="1383" y2="743.17" stroke="#f8f5f0" stroke-width="0.5"/>
<line x1="257" y1="747.86" x2="1383" y2="747.86" stroke="#f8f5f0" stroke-width="0.5"/>
<line x1="257" y1="752.55" x2="1383" y2="752.55" stroke="#f8f5f0" stroke-width="0.5"/>
<line x1="257" y1="757.24" x2="1383" y2="757.24" stroke="#f8f5f0" stroke-width="0.5"/>
<line x1="257" y1="761.93" x2="1383" y2="761.93" stroke="#f8f5f0" stroke-width="0.5"/>
<line x1="257" y1="766.62" x2="1383" y2="766.62" stroke="#f8f5f0" stroke-width="0.5"/>
<line x1="257" y1="771.31" x2="1383" y2="771.31" stroke="#f8f5f0" stroke-width="0.5"/>
<line x1="257" y1="776.50" x2="1383" y2="776.50" stroke="#e4e0da" stroke-width="1"/>
<line x1="257" y1="780.69" x2="1383" y2="780.69" stroke="#f8f5f0" stroke-width="0.5"/>
<line x1="257" y1="785.38" x2="1383" y2="785.38" stroke="#f8f5f0" stroke-width="0.5"/>
<line x1="257" y1="790.07" x2="1383" y2="790.07" stroke="#f8f5f0" stroke-width="0.5"/>
<line x1="257" y1="794.76" x2="1383" y2="794.76" stroke="#f8f5f0" stroke-width="0.5"/>
<line x1="257" y1="799.45" x2="1383" y2="799.45" stroke="#f8f5f0" stroke-width="0.5"/>
<line x1="257" y1="804.14" x2="1383" y2="804.14" stroke="#f8f5f0" stroke-width="0.5"/>
<line x1="257" y1="808.83" x2="1383" y2="808.83" stroke="#f8f5f0" stroke-width="0.5"/>
<line x1="257" y1="813.52" x2="1383" y2="813.52" stroke="#f8f5f0" stroke-width="0.5"/>
<path d="M630,154.8 L681.4,154.8 L681.4,137.5" fill="none" stroke="#2f2f92" stroke-width="1.4"/>
<path d="M630,166.6 L714.4,166.6 L714.4,144.5" fill="none" stroke="#2f2f92" stroke-width="1.4"/>
<path d="M630,190 L653.2,190 L653.2,175.9 L742.4,175.9 L742.4,194.6" fill="none" stroke="#2f2f92" stroke-width="1.4"/>
<path d="M676.8,203 L676.8,194.6 L831.1,194.6 L831.1,230.9 A3.7,3.7 0 0 1 831.1,238.3 L831.1,266.3 A3.7,3.7 0 0 1 831.1,273.7 L831.1,275.9 A3.7,3.7 0 0 1 831.1,283.3 L831.1,345 L822.8,345" fill="none" stroke="#2f2f92" stroke-width="1.4"/>
<path d="M630,201.8 L648.7,201.8 L648.7,234.6 L840.9,234.6 L840.9,266.3 A3.7,3.7 0 0 1 840.9,273.7 L840.9,275.9 A3.7,3.7 0 0 1 840.9,283.3 L840.9,358.7 L822.8,358.7" fill="none" stroke="#2f2f92" stroke-width="1.4"/>
<path d="M643.8,399.7 L620.6,399.7 L620.6,283.3 A3.7,3.7 0 0 0 620.6,275.9 L620.6,270 L935.3,270 L935.3,258.2" fill="none" stroke="#2f2f92" stroke-width="1.4"/>
<path d="M517.5,332.7 L587.3,332.7 L587.3,279.6 L855.3,279.6 L855.3,399.7 L822.8,399.7" fill="none" stroke="#2f2f92" stroke-width="1.4"/>
<path d="M860,217 L860,258.2 L890,258.2" fill="none" stroke="#2f2f92" stroke-width="1.4"/>
<path d="M860,244.3 L890,244.3" fill="none" stroke="#2f2f92" stroke-width="1.4"/>
<path d="M912,244.3 L1028.7,244.3 L1028.7,300" fill="none" stroke="#2f2f92" stroke-width="1.4"/>
<path d="M912,258.2 L947.9,258.2 L947.9,264.5 L1000.3,264.5 L1000.3,274.5" fill="none" stroke="#2f2f92" stroke-width="1.4"/>
<path d="M822.8,372.4 L851.6,372.4 A3.7,3.7 0 0 1 859,372.4 L883.6,372.4 L883.6,326 L1005,326" fill="none" stroke="#2f2f92" stroke-width="1.4"/>
<path d="M822.8,386 L851.6,386 A3.7,3.7 0 0 1 859,386 L873.5,386 L873.5,504.9 L1090,504.9" fill="none" stroke="#2f2f92" stroke-width="1.4"/>
<path d="M822.8,427 L860,427 L860,596.7 A3.7,3.7 0 0 1 860,604.1 L860,612.1 L892.2,612.1" fill="none" stroke="#2f2f92" stroke-width="1.4"/>
<path d="M822.8,440.6 L850.2,440.6 L850.2,600.4 L892.2,600.4" fill="none" stroke="#2f2f92" stroke-width="1.4"/>
<path d="M822.8,467.8 L836.5,467.8 L836.5,645.1 L745.6,645.1" fill="none" stroke="#2f2f92" stroke-width="1.4"/>
<path d="M822.8,481.5 L827.4,481.5 L827.4,633.6 L745.6,633.6" fill="none" stroke="#2f2f92" stroke-width="1.4"/>
<path d="M897.6,405 L897.6,448.1 L915.7,448.1" fill="none" stroke="#2f2f92" stroke-width="1.4"/>
<path d="M897.6,433.9 L915.7,433.9" fill="none" stroke="#2f2f92" stroke-width="1.4"/>
<path d="M1004.8,433.9 L1136.4,433.9 L1136.4,440" fill="none" stroke="#2f2f92" stroke-width="1.4"/>
<path d="M1004.8,448.1 L1024,448.1 L1024,468.7 L1112.8,468.7 L1112.8,478" fill="none" stroke="#2f2f92" stroke-width="1.4"/>
<path d="M517.5,321.3 L531.3,321.3 L531.3,259" fill="none" stroke="#2f2f92" stroke-width="1.4"/>
<path d="M531.3,274.8 L550.3,274.8 L550.3,284" fill="none" stroke="#2f2f92" stroke-width="1.4"/>
<path d="M550.3,325 L550.3,332.7" fill="none" stroke="#2f2f92" stroke-width="1.4"/>
<path d="M517.5,356.6 L531.3,356.6 L531.3,371" fill="none" stroke="#2f2f92" stroke-width="1.4"/>
<path d="M522,452.8 L523.5,454.6 L593.3,454.6 A3.7,3.7 0 0 1 600.7,454.6 L643.8,454.6" fill="none" stroke="#2f2f92" stroke-width="1.4"/>
<path d="M522,464.8 L597,464.8 L597,440.8 L643.8,440.8" fill="none" stroke="#2f2f92" stroke-width="1.4"/>
<path d="M522,476.5 L564,476.5 L564,519" fill="none" stroke="#2f2f92" stroke-width="1.4"/>
<path d="M522,488.3 L531.2,488.3 L531.2,516" fill="none" stroke="#2f2f92" stroke-width="1.4"/>
<path d="M643.8,468 L606.2,468 L606.2,519" fill="none" stroke="#2f2f92" stroke-width="1.4"/>
<path d="M643.8,495.3 L634.5,495.3 L634.5,516" fill="none" stroke="#2f2f92" stroke-width="1.4"/>
<path d="M745.6,621.5 L775.2,621.5 L775.2,611" fill="none" stroke="#2f2f92" stroke-width="1.4"/>
<path d="M745.6,656.9 L775.2,656.9 L775.2,680" fill="none" stroke="#2f2f92" stroke-width="1.4"/>
<path d="M1022,600.4 L1094.7,600.4 L1094.7,625" fill="none" stroke="#2f2f92" stroke-width="1.4"/>
<path d="M1022,612.1 L1057.1,612.1 L1057.1,623" fill="none" stroke="#2f2f92" stroke-width="1.4"/>
<circle cx="742.4" cy="194.6" r="2.7" fill="#00007a"/>
<circle cx="860" cy="244.3" r="2.7" fill="#00007a"/>
<circle cx="935.3" cy="258.2" r="2.7" fill="#00007a"/>
<circle cx="897.6" cy="433.9" r="2.7" fill="#00007a"/>
<circle cx="531.3" cy="274.8" r="2.7" fill="#00007a"/>
<circle cx="550.3" cy="332.7" r="2.7" fill="#00007a"/>
<line x1="681.4" y1="126.6" x2="681.4" y2="137.6" stroke="#8a3232" stroke-width="1.3"/>
<line x1="675" y1="126.6" x2="687.8" y2="126.6" stroke="#8a3232" stroke-width="1.3"/>
<text x="681.4" y="125.2" fill="#8a3232" font-size="10.6" text-anchor="middle">+5</text>
<line x1="714.4" y1="144.7" x2="714.4" y2="135.7" stroke="#8a3232" stroke-width="1.3"/>
<line x1="702.1" y1="135.7" x2="726.7" y2="135.7" stroke="#8a3232" stroke-width="1.3"/>
<line x1="705.9" y1="132.2" x2="722.9" y2="132.2" stroke="#8a3232" stroke-width="1.3"/>
<line x1="709.4" y1="128.7" x2="719.4" y2="128.7" stroke="#8a3232" stroke-width="1.3"/>
<line x1="712.9" y1="125.1" x2="715.9" y2="125.1" stroke="#8a3232" stroke-width="1.3"/>
<text x="714.4" y="122" fill="#8a3232" font-size="10.6" text-anchor="middle">GND</text>
<line x1="676.8" y1="201.8" x2="676.8" y2="205.8" stroke="#8a3232" stroke-width="1.3"/>
<line x1="664.5" y1="205.8" x2="689.1" y2="205.8" stroke="#8a3232" stroke-width="1.3"/>
<line x1="668.3" y1="209.3" x2="685.3" y2="209.3" stroke="#8a3232" stroke-width="1.3"/>
<line x1="671.8" y1="212.8" x2="681.8" y2="212.8" stroke="#8a3232" stroke-width="1.3"/>
<line x1="675.3" y1="216.4" x2="678.3" y2="216.4" stroke="#8a3232" stroke-width="1.3"/>
<text x="676.8" y="228.4" fill="#8a3232" font-size="10.6" text-anchor="middle">GND</text>
<line x1="860" y1="206.2" x2="860" y2="217.2" stroke="#8a3232" stroke-width="1.3"/>
<line x1="853.6" y1="206.2" x2="866.4" y2="206.2" stroke="#8a3232" stroke-width="1.3"/>
<text x="860" y="204.8" fill="#8a3232" font-size="10.6" text-anchor="middle">+5</text>
<line x1="1000.3" y1="274.1" x2="1000.3" y2="283.1" stroke="#8a3232" stroke-width="1.3"/>
<line x1="988" y1="283.1" x2="1012.6" y2="283.1" stroke="#8a3232" stroke-width="1.3"/>
<line x1="991.8" y1="286.6" x2="1008.8" y2="286.6" stroke="#8a3232" stroke-width="1.3"/>
<line x1="995.3" y1="290.1" x2="1005.3" y2="290.1" stroke="#8a3232" stroke-width="1.3"/>
<line x1="998.8" y1="293.7" x2="1001.8" y2="293.7" stroke="#8a3232" stroke-width="1.3"/>
<text x="1000.3" y="302.9" fill="#8a3232" font-size="10.6" text-anchor="middle">GND</text>
<line x1="1028.7" y1="361" x2="1028.7" y2="373" stroke="#8a3232" stroke-width="1.3"/>
<line x1="1016.4" y1="373" x2="1041" y2="373" stroke="#8a3232" stroke-width="1.3"/>
<line x1="1020.2" y1="376.5" x2="1037.2" y2="376.5" stroke="#8a3232" stroke-width="1.3"/>
<line x1="1023.7" y1="380" x2="1033.7" y2="380" stroke="#8a3232" stroke-width="1.3"/>
<line x1="1027.2" y1="383.6" x2="1030.2" y2="383.6" stroke="#8a3232" stroke-width="1.3"/>
<text x="1028.7" y="394.7" fill="#8a3232" font-size="10.6" text-anchor="middle">GND</text>
<line x1="531.3" y1="248.6" x2="531.3" y2="259.6" stroke="#8a3232" stroke-width="1.3"/>
<line x1="524.9" y1="248.6" x2="537.7" y2="248.6" stroke="#8a3232" stroke-width="1.3"/>
<text x="531.3" y="247.2" fill="#8a3232" font-size="10.6" text-anchor="middle">+5</text>
<line x1="531.3" y1="370.7" x2="531.3" y2="379.7" stroke="#8a3232" stroke-width="1.3"/>
<line x1="519" y1="379.7" x2="543.6" y2="379.7" stroke="#8a3232" stroke-width="1.3"/>
<line x1="522.8" y1="383.2" x2="539.8" y2="383.2" stroke="#8a3232" stroke-width="1.3"/>
<line x1="526.3" y1="386.7" x2="536.3" y2="386.7" stroke="#8a3232" stroke-width="1.3"/>
<line x1="529.8" y1="390.3" x2="532.8" y2="390.3" stroke="#8a3232" stroke-width="1.3"/>
<text x="531.3" y="401.4" fill="#8a3232" font-size="10.6" text-anchor="middle">GND</text>
<line x1="564" y1="530.2" x2="564" y2="519.2" stroke="#8a3232" stroke-width="1.3"/>
<line x1="557.6" y1="530.2" x2="570.4" y2="530.2" stroke="#8a3232" stroke-width="1.3"/>
<text x="564" y="540.8" fill="#8a3232" font-size="10.6" text-anchor="middle">+5</text>
<line x1="531.2" y1="515.4" x2="531.2" y2="525.4" stroke="#8a3232" stroke-width="1.3"/>
<line x1="518.9" y1="525.4" x2="543.5" y2="525.4" stroke="#8a3232" stroke-width="1.3"/>
<line x1="522.7" y1="528.9" x2="539.7" y2="528.9" stroke="#8a3232" stroke-width="1.3"/>
<line x1="526.2" y1="532.4" x2="536.2" y2="532.4" stroke="#8a3232" stroke-width="1.3"/>
<line x1="529.7" y1="536" x2="532.7" y2="536" stroke="#8a3232" stroke-width="1.3"/>
<text x="531.2" y="547.1" fill="#8a3232" font-size="10.6" text-anchor="middle">GND</text>
<line x1="606.2" y1="530.2" x2="606.2" y2="519.2" stroke="#8a3232" stroke-width="1.3"/>
<line x1="599.8" y1="530.2" x2="612.6" y2="530.2" stroke="#8a3232" stroke-width="1.3"/>
<text x="606.2" y="540.8" fill="#8a3232" font-size="10.6" text-anchor="middle">+5</text>
<line x1="634.5" y1="515.4" x2="634.5" y2="525.4" stroke="#8a3232" stroke-width="1.3"/>
<line x1="622.2" y1="525.4" x2="646.8" y2="525.4" stroke="#8a3232" stroke-width="1.3"/>
<line x1="626" y1="528.9" x2="643" y2="528.9" stroke="#8a3232" stroke-width="1.3"/>
<line x1="629.5" y1="532.4" x2="639.5" y2="532.4" stroke="#8a3232" stroke-width="1.3"/>
<line x1="633" y1="536" x2="636" y2="536" stroke="#8a3232" stroke-width="1.3"/>
<text x="634.5" y="547.1" fill="#8a3232" font-size="10.6" text-anchor="middle">GND</text>
<line x1="897.6" y1="394.7" x2="897.6" y2="405.7" stroke="#8a3232" stroke-width="1.3"/>
<line x1="891.2" y1="394.7" x2="904" y2="394.7" stroke="#8a3232" stroke-width="1.3"/>
<text x="897.6" y="393.3" fill="#8a3232" font-size="10.6" text-anchor="middle">+5</text>
<line x1="1136.4" y1="439.1" x2="1136.4" y2="448.1" stroke="#8a3232" stroke-width="1.3"/>
<line x1="1124.1" y1="448.1" x2="1148.7" y2="448.1" stroke="#8a3232" stroke-width="1.3"/>
<line x1="1127.9" y1="451.6" x2="1144.9" y2="451.6" stroke="#8a3232" stroke-width="1.3"/>
<line x1="1131.4" y1="455.1" x2="1141.4" y2="455.1" stroke="#8a3232" stroke-width="1.3"/>
<line x1="1134.9" y1="458.7" x2="1137.9" y2="458.7" stroke="#8a3232" stroke-width="1.3"/>
<text x="1136.4" y="468.1" fill="#8a3232" font-size="10.6" text-anchor="middle">GND</text>
<line x1="1112.8" y1="540.5" x2="1112.8" y2="552.5" stroke="#8a3232" stroke-width="1.3"/>
<line x1="1100.5" y1="552.5" x2="1125.1" y2="552.5" stroke="#8a3232" stroke-width="1.3"/>
<line x1="1104.3" y1="556" x2="1121.3" y2="556" stroke="#8a3232" stroke-width="1.3"/>
<line x1="1107.8" y1="559.5" x2="1117.8" y2="559.5" stroke="#8a3232" stroke-width="1.3"/>
<line x1="1111.3" y1="563.1" x2="1114.3" y2="563.1" stroke="#8a3232" stroke-width="1.3"/>
<text x="1112.8" y="574.2" fill="#8a3232" font-size="10.6" text-anchor="middle">GND</text>
<line x1="775.2" y1="600.7" x2="775.2" y2="611.7" stroke="#8a3232" stroke-width="1.3"/>
<line x1="768.8" y1="600.7" x2="781.6" y2="600.7" stroke="#8a3232" stroke-width="1.3"/>
<text x="775.2" y="599.3" fill="#8a3232" font-size="10.6" text-anchor="middle">+5</text>
<line x1="775.2" y1="680.2" x2="775.2" y2="689.2" stroke="#8a3232" stroke-width="1.3"/>
<line x1="762.9" y1="689.2" x2="787.5" y2="689.2" stroke="#8a3232" stroke-width="1.3"/>
<line x1="766.7" y1="692.7" x2="783.7" y2="692.7" stroke="#8a3232" stroke-width="1.3"/>
<line x1="770.2" y1="696.2" x2="780.2" y2="696.2" stroke="#8a3232" stroke-width="1.3"/>
<line x1="773.7" y1="699.8" x2="776.7" y2="699.8" stroke="#8a3232" stroke-width="1.3"/>
<text x="775.2" y="711.8" fill="#8a3232" font-size="10.6" text-anchor="middle">GND</text>
<line x1="1057.1" y1="633.9" x2="1057.1" y2="622.9" stroke="#8a3232" stroke-width="1.3"/>
<line x1="1050.7" y1="633.9" x2="1063.5" y2="633.9" stroke="#8a3232" stroke-width="1.3"/>
<text x="1057.1" y="644.5" fill="#8a3232" font-size="10.6" text-anchor="middle">+5</text>
<line x1="1094.7" y1="624.9" x2="1094.7" y2="633.9" stroke="#8a3232" stroke-width="1.3"/>
<line x1="1082.4" y1="633.9" x2="1107" y2="633.9" stroke="#8a3232" stroke-width="1.3"/>
<line x1="1086.2" y1="637.4" x2="1103.2" y2="637.4" stroke="#8a3232" stroke-width="1.3"/>
<line x1="1089.7" y1="640.9" x2="1099.7" y2="640.9" stroke="#8a3232" stroke-width="1.3"/>
<line x1="1093.2" y1="644.5" x2="1096.2" y2="644.5" stroke="#8a3232" stroke-width="1.3"/>
<text x="1094.7" y="654.9" fill="#8a3232" font-size="10.6" text-anchor="middle">GND</text>
<line x1="587.5" y1="154.8" x2="630" y2="154.8" stroke="#3c3c3c" stroke-width="1.3"/>
<text x="597.3" y="153" fill="#2a2a2a" font-size="10.6" text-anchor="start">VCC</text>
<line x1="587.5" y1="166.6" x2="630" y2="166.6" stroke="#3c3c3c" stroke-width="1.3"/>
<text x="597.3" y="164.8" fill="#2a2a2a" font-size="10.6" text-anchor="start">GND</text>
<line x1="587.5" y1="178.3" x2="630" y2="178.3" stroke="#3c3c3c" stroke-width="1.3"/>
<text x="597.3" y="176.5" fill="#2a2a2a" font-size="10.6" text-anchor="start">SET</text>
<line x1="587.5" y1="190.1" x2="630" y2="190.1" stroke="#3c3c3c" stroke-width="1.3"/>
<text x="597.3" y="188.3" fill="#2a2a2a" font-size="10.6" text-anchor="start">RX</text>
<line x1="587.5" y1="201.9" x2="630" y2="201.9" stroke="#3c3c3c" stroke-width="1.3"/>
<text x="597.3" y="200.1" fill="#2a2a2a" font-size="10.6" text-anchor="start">TX</text>
<line x1="587.5" y1="213.7" x2="630" y2="213.7" stroke="#3c3c3c" stroke-width="1.3"/>
<text x="597.3" y="211.8" fill="#2a2a2a" font-size="10.6" text-anchor="start">RESET</text>
<rect x="552.2" y="148" width="35.3" height="72.4" fill="#ffffb3" stroke="#a8603c" stroke-width="1.1"/>
<text x="545.3" y="141.9" fill="#1f1f80" font-size="10.75" text-anchor="start">PMS5003 PM2.5 Sensor</text>
<line x1="693.4" y1="194.6" x2="702.4" y2="194.6" stroke="#3c3c3c" stroke-width="1.3"/>
<line x1="726.8" y1="194.6" x2="735.8" y2="194.6" stroke="#3c3c3c" stroke-width="1.3"/>
<rect x="702.4" y="189.7" width="24.4" height="9.8" fill="none" stroke="#2a2ab0" stroke-width="1.4"/>
<text x="702.9" y="187.8" fill="#1f1f80" font-size="10.75" text-anchor="start">R1</text>
<text x="702.9" y="209" fill="#1f1f80" font-size="10.75" text-anchor="start">1K</text>
<line x1="754.4" y1="194.6" x2="763.4" y2="194.6" stroke="#3c3c3c" stroke-width="1.3"/>
<line x1="787.7" y1="194.6" x2="796.7" y2="194.6" stroke="#3c3c3c" stroke-width="1.3"/>
<rect x="763.4" y="189.7" width="24.3" height="9.8" fill="none" stroke="#2a2ab0" stroke-width="1.4"/>
<text x="763.9" y="187.8" fill="#1f1f80" font-size="10.75" text-anchor="start">R2</text>
<text x="763.9" y="209" fill="#1f1f80" font-size="10.75" text-anchor="start">2K</text>
<line x1="951.5" y1="264.5" x2="960.5" y2="264.5" stroke="#3c3c3c" stroke-width="1.3"/>
<line x1="984.6" y1="264.5" x2="993.6" y2="264.5" stroke="#3c3c3c" stroke-width="1.3"/>
<rect x="960.5" y="259.6" width="24.1" height="9.8" fill="none" stroke="#2a2ab0" stroke-width="1.4"/>
<text x="961" y="257.7" fill="#1f1f80" font-size="10.75" text-anchor="start">R3</text>
<text x="961" y="278.9" fill="#1f1f80" font-size="10.75" text-anchor="start">10K</text>
<line x1="916" y1="326" x2="925" y2="326" stroke="#3c3c3c" stroke-width="1.3"/>
<line x1="949.7" y1="326" x2="958.7" y2="326" stroke="#3c3c3c" stroke-width="1.3"/>
<rect x="925" y="321.1" width="24.7" height="9.8" fill="none" stroke="#2a2ab0" stroke-width="1.4"/>
<text x="925.5" y="319.2" fill="#1f1f80" font-size="10.75" text-anchor="start">R5</text>
<text x="925.5" y="340.4" fill="#1f1f80" font-size="10.75" text-anchor="start">1K</text>
<line x1="1040.2" y1="433.9" x2="1049.2" y2="433.9" stroke="#3c3c3c" stroke-width="1.3"/>
<line x1="1073.6" y1="433.9" x2="1082.6" y2="433.9" stroke="#3c3c3c" stroke-width="1.3"/>
<rect x="1049.2" y="429" width="24.4" height="9.8" fill="none" stroke="#2a2ab0" stroke-width="1.4"/>
<text x="1049.7" y="427.1" fill="#1f1f80" font-size="10.75" text-anchor="start">R6</text>
<text x="1049.7" y="448.3" fill="#1f1f80" font-size="10.75" text-anchor="start">1K</text>
<line x1="1001" y1="504.9" x2="1010" y2="504.9" stroke="#3c3c3c" stroke-width="1.3"/>
<line x1="1034.2" y1="504.9" x2="1043.2" y2="504.9" stroke="#3c3c3c" stroke-width="1.3"/>
<rect x="1010" y="500" width="24.2" height="9.8" fill="none" stroke="#2a2ab0" stroke-width="1.4"/>
<text x="1010.5" y="498.1" fill="#1f1f80" font-size="10.75" text-anchor="start">R7</text>
<text x="1010.5" y="519.3" fill="#1f1f80" font-size="10.75" text-anchor="start">100K</text>
<line x1="550.3" y1="283" x2="550.3" y2="292.7" stroke="#3c3c3c" stroke-width="1.3"/>
<line x1="550.3" y1="316.5" x2="550.3" y2="326" stroke="#3c3c3c" stroke-width="1.3"/>
<rect x="545.5" y="292.7" width="9.8" height="23.8" fill="none" stroke="#2a2ab0" stroke-width="1.4"/>
<text x="556.3" y="302.9" fill="#1f1f80" font-size="10.75" text-anchor="start">R4</text>
<text x="556.3" y="314.9" fill="#1f1f80" font-size="10.75" text-anchor="start">10K</text>
<line x1="876" y1="244.3" x2="893" y2="244.3" stroke="#3c3c3c" stroke-width="1.3"/>
<line x1="876" y1="258.2" x2="893" y2="258.2" stroke="#3c3c3c" stroke-width="1.3"/>
<line x1="909" y1="244.3" x2="928" y2="244.3" stroke="#3c3c3c" stroke-width="1.3"/>
<line x1="909" y1="258.2" x2="928" y2="258.2" stroke="#3c3c3c" stroke-width="1.3"/>
<circle cx="901.2" cy="251.3" r="11.6" fill="#ffffb3" stroke="#7a7ab0" stroke-width="1"/>
<text x="878.3" y="230.8" fill="#1f1f80" font-size="10.75" text-anchor="start">MP503 VOC Sensor</text>
<text x="879.5" y="243.1" fill="#2a2a2a" font-size="9.5" text-anchor="start">1</text>
<text x="920.5" y="243.1" fill="#2a2a2a" font-size="9.5" text-anchor="start">2</text>
<text x="879.5" y="257.4" fill="#2a2a2a" font-size="9.5" text-anchor="start">3</text>
<text x="920.5" y="257.4" fill="#2a2a2a" font-size="9.5" text-anchor="start">4</text>
<line x1="992.9" y1="325.8" x2="1016.9" y2="325.8" stroke="#3c3c3c" stroke-width="1.3"/>
<line x1="1028.7" y1="313.5" x2="1028.7" y2="290" stroke="#3c3c3c" stroke-width="1.3"/>
<line x1="1028.7" y1="337.2" x2="1028.7" y2="361" stroke="#3c3c3c" stroke-width="1.3"/>
<line x1="1016.9" y1="314.3" x2="1016.9" y2="336.1" stroke="#2222dd" stroke-width="1.6"/>
<line x1="1016.9" y1="322.1" x2="1028.7" y2="313.5" stroke="#2222dd" stroke-width="1.5"/>
<line x1="1016.9" y1="329.4" x2="1028.7" y2="337.2" stroke="#2222dd" stroke-width="1.5"/>
<path d="M1028.7,337.2 l-7.2,-1.2 l3.6,-5.4 z" fill="#1414ee"/>
<text x="1032.7" y="322.6" fill="#1f1f80" font-size="10.75" text-anchor="start">Q1</text>
<text x="1032.7" y="334" fill="#1f1f80" font-size="10.75" text-anchor="start">2N3904</text>
<text x="1002.9" y="323.4" fill="#2a2a2a" font-size="9.5" text-anchor="start">2</text>
<text transform="translate(1026.2,303.8) rotate(-90)" fill="#2a2a2a" font-size="9.5">3</text>
<text transform="translate(1026.2,351.3) rotate(-90)" fill="#2a2a2a" font-size="9.5">1</text>
<line x1="1077.2" y1="504.9" x2="1101.2" y2="504.9" stroke="#3c3c3c" stroke-width="1.3"/>
<line x1="1113" y1="492.6" x2="1113" y2="470" stroke="#3c3c3c" stroke-width="1.3"/>
<line x1="1113" y1="516.3" x2="1113" y2="540" stroke="#3c3c3c" stroke-width="1.3"/>
<line x1="1101.2" y1="493.4" x2="1101.2" y2="515.2" stroke="#2222dd" stroke-width="1.6"/>
<line x1="1101.2" y1="501.2" x2="1113" y2="492.6" stroke="#2222dd" stroke-width="1.5"/>
<line x1="1101.2" y1="508.5" x2="1113" y2="516.3" stroke="#2222dd" stroke-width="1.5"/>
<path d="M1113,516.3 l-7.2,-1.2 l3.6,-5.4 z" fill="#1414ee"/>
<text x="1117" y="501.7" fill="#1f1f80" font-size="10.75" text-anchor="start">Q2</text>
<text x="1117" y="513.1" fill="#1f1f80" font-size="10.75" text-anchor="start">2N3904</text>
<text x="1087.2" y="502.5" fill="#2a2a2a" font-size="9.5" text-anchor="start">2</text>
<text transform="translate(1110.5,482.9) rotate(-90)" fill="#2a2a2a" font-size="9.5">3</text>
<text transform="translate(1110.5,530.4) rotate(-90)" fill="#2a2a2a" font-size="9.5">1</text>
<line x1="479.8" y1="321.3" x2="517.5" y2="321.3" stroke="#3c3c3c" stroke-width="1.3"/>
<text x="489.5" y="319.5" fill="#2a2a2a" font-size="10.6" text-anchor="start">VCC</text>
<line x1="479.8" y1="333.1" x2="517.5" y2="333.1" stroke="#3c3c3c" stroke-width="1.3"/>
<text x="489.5" y="331.3" fill="#2a2a2a" font-size="10.6" text-anchor="start">DATA</text>
<line x1="479.8" y1="344.8" x2="517.5" y2="344.8" stroke="#3c3c3c" stroke-width="1.3"/>
<text x="489.5" y="343" fill="#2a2a2a" font-size="10.6" text-anchor="start">NC</text>
<line x1="479.8" y1="356.6" x2="517.5" y2="356.6" stroke="#3c3c3c" stroke-width="1.3"/>
<text x="489.5" y="354.8" fill="#2a2a2a" font-size="10.6" text-anchor="start">GND</text>
<rect x="456.2" y="316.5" width="23.6" height="44.8" fill="#ffffb3" stroke="#a8603c" stroke-width="1.1"/>
<text x="456" y="305.6" fill="#1f1f80" font-size="10.75" text-anchor="start">DHT1</text>
<line x1="484.6" y1="429.5" x2="522" y2="429.5" stroke="#3c3c3c" stroke-width="1.3"/>
<text x="494.3" y="427.7" fill="#2a2a2a" font-size="10.6" text-anchor="start">32K</text>
<line x1="484.6" y1="441.3" x2="522" y2="441.3" stroke="#3c3c3c" stroke-width="1.3"/>
<text x="494.3" y="439.5" fill="#2a2a2a" font-size="10.6" text-anchor="start">SQW</text>
<line x1="484.6" y1="453" x2="522" y2="453" stroke="#3c3c3c" stroke-width="1.3"/>
<text x="494.3" y="451.2" fill="#2a2a2a" font-size="10.6" text-anchor="start">SCL</text>
<line x1="484.6" y1="464.8" x2="522" y2="464.8" stroke="#3c3c3c" stroke-width="1.3"/>
<text x="494.3" y="463" fill="#2a2a2a" font-size="10.6" text-anchor="start">SDA</text>
<line x1="484.6" y1="476.5" x2="522" y2="476.5" stroke="#3c3c3c" stroke-width="1.3"/>
<text x="494.3" y="474.7" fill="#2a2a2a" font-size="10.6" text-anchor="start">VCC</text>
<line x1="484.6" y1="488.3" x2="522" y2="488.3" stroke="#3c3c3c" stroke-width="1.3"/>
<text x="494.3" y="486.5" fill="#2a2a2a" font-size="10.6" text-anchor="start">GND</text>
<rect x="460.9" y="424.9" width="23.7" height="67.8" fill="#ffffb3" stroke="#a8603c" stroke-width="1.1"/>
<text x="460.9" y="414.1" fill="#1f1f80" font-size="10.75" text-anchor="start">DS3231 RTC</text>
<line x1="643.8" y1="345.1" x2="690.8" y2="345.1" stroke="#3c3c3c" stroke-width="1.3"/>
<text x="681.5" y="343.2" fill="#2a2a2a" font-size="10.6" text-anchor="end">D10</text>
<line x1="643.8" y1="358.8" x2="690.8" y2="358.8" stroke="#3c3c3c" stroke-width="1.3"/>
<text x="681.5" y="356.9" fill="#2a2a2a" font-size="10.6" text-anchor="end">D11</text>
<line x1="643.8" y1="372.4" x2="690.8" y2="372.4" stroke="#3c3c3c" stroke-width="1.3"/>
<text x="681.5" y="370.5" fill="#2a2a2a" font-size="10.6" text-anchor="end">D13</text>
<line x1="643.8" y1="386.1" x2="690.8" y2="386.1" stroke="#3c3c3c" stroke-width="1.3"/>
<text x="681.5" y="384.2" fill="#2a2a2a" font-size="10.6" text-anchor="end">A0</text>
<line x1="643.8" y1="399.7" x2="690.8" y2="399.7" stroke="#3c3c3c" stroke-width="1.3"/>
<text x="681.5" y="397.8" fill="#2a2a2a" font-size="10.6" text-anchor="end">A1</text>
<line x1="643.8" y1="413.4" x2="690.8" y2="413.4" stroke="#3c3c3c" stroke-width="1.3"/>
<text x="681.5" y="411.5" fill="#2a2a2a" font-size="10.6" text-anchor="end">A2</text>
<line x1="643.8" y1="427.1" x2="690.8" y2="427.1" stroke="#3c3c3c" stroke-width="1.3"/>
<text x="681.5" y="425.2" fill="#2a2a2a" font-size="10.6" text-anchor="end">A3</text>
<line x1="643.8" y1="440.7" x2="690.8" y2="440.7" stroke="#3c3c3c" stroke-width="1.3"/>
<text x="681.5" y="438.8" fill="#2a2a2a" font-size="10.6" text-anchor="end">A4/SDA</text>
<line x1="643.8" y1="454.4" x2="690.8" y2="454.4" stroke="#3c3c3c" stroke-width="1.3"/>
<text x="681.5" y="452.5" fill="#2a2a2a" font-size="10.6" text-anchor="end">A5/SCL</text>
<line x1="643.8" y1="468" x2="690.8" y2="468" stroke="#3c3c3c" stroke-width="1.3"/>
<text x="681.5" y="466.1" fill="#2a2a2a" font-size="10.6" text-anchor="end">VCC</text>
<line x1="643.8" y1="481.7" x2="690.8" y2="481.7" stroke="#3c3c3c" stroke-width="1.3"/>
<text x="681.5" y="479.8" fill="#2a2a2a" font-size="10.6" text-anchor="end">RST</text>
<line x1="643.8" y1="495.4" x2="690.8" y2="495.4" stroke="#3c3c3c" stroke-width="1.3"/>
<text x="681.5" y="493.5" fill="#2a2a2a" font-size="10.6" text-anchor="end">GND</text>
<line x1="643.8" y1="509" x2="690.8" y2="509" stroke="#3c3c3c" stroke-width="1.3"/>
<text x="681.5" y="507.1" fill="#2a2a2a" font-size="10.6" text-anchor="end">RAW</text>
<line x1="775.2" y1="345.1" x2="822.8" y2="345.1" stroke="#3c3c3c" stroke-width="1.3"/>
<text x="785.3" y="343.2" fill="#2a2a2a" font-size="10.6" text-anchor="start">D9</text>
<line x1="775.2" y1="358.8" x2="822.8" y2="358.8" stroke="#3c3c3c" stroke-width="1.3"/>
<text x="785.3" y="356.9" fill="#2a2a2a" font-size="10.6" text-anchor="start">D8</text>
<line x1="775.2" y1="372.4" x2="822.8" y2="372.4" stroke="#3c3c3c" stroke-width="1.3"/>
<text x="785.3" y="370.5" fill="#2a2a2a" font-size="10.6" text-anchor="start">D7</text>
<line x1="775.2" y1="386.1" x2="822.8" y2="386.1" stroke="#3c3c3c" stroke-width="1.3"/>
<text x="785.3" y="384.2" fill="#2a2a2a" font-size="10.6" text-anchor="start">D6</text>
<line x1="775.2" y1="399.7" x2="822.8" y2="399.7" stroke="#3c3c3c" stroke-width="1.3"/>
<text x="785.3" y="397.8" fill="#2a2a2a" font-size="10.6" text-anchor="start">D5</text>
<line x1="775.2" y1="413.4" x2="822.8" y2="413.4" stroke="#3c3c3c" stroke-width="1.3"/>
<text x="785.3" y="411.5" fill="#2a2a2a" font-size="10.6" text-anchor="start">D4</text>
<line x1="775.2" y1="427.1" x2="822.8" y2="427.1" stroke="#3c3c3c" stroke-width="1.3"/>
<text x="785.3" y="425.2" fill="#2a2a2a" font-size="10.6" text-anchor="start">D3</text>
<line x1="775.2" y1="440.7" x2="822.8" y2="440.7" stroke="#3c3c3c" stroke-width="1.3"/>
<text x="785.3" y="438.8" fill="#2a2a2a" font-size="10.6" text-anchor="start">D2</text>
<line x1="775.2" y1="454.4" x2="822.8" y2="454.4" stroke="#3c3c3c" stroke-width="1.3"/>
<text x="785.3" y="452.5" fill="#2a2a2a" font-size="10.6" text-anchor="start">GND</text>
<line x1="775.2" y1="468" x2="822.8" y2="468" stroke="#3c3c3c" stroke-width="1.3"/>
<text x="785.3" y="466.1" fill="#2a2a2a" font-size="10.6" text-anchor="start">RX1</text>
<line x1="775.2" y1="481.7" x2="822.8" y2="481.7" stroke="#3c3c3c" stroke-width="1.3"/>
<text x="785.3" y="479.8" fill="#2a2a2a" font-size="10.6" text-anchor="start">TX0</text>
<line x1="707.5" y1="285" x2="707.5" y2="333.6" stroke="#3c3c3c" stroke-width="1.3"/>
<line x1="723.9" y1="285" x2="723.9" y2="333.6" stroke="#3c3c3c" stroke-width="1.3"/>
<line x1="763.3" y1="514" x2="763.3" y2="561.5" stroke="#3c3c3c" stroke-width="1.3"/>
<rect x="690.8" y="333.6" width="84.4" height="180.4" fill="#ffffb3" stroke="#a8603c" stroke-width="1.1"/>
<path d="M676.8,345.1 l7,-2.6 l7,2.6 l-7,2.6 z M683.8,342.5 v5.2" fill="#fff" stroke="#3c3c3c" stroke-width="0.9"/>
<path d="M676.8,358.8 l7,-2.6 l7,2.6 l-7,2.6 z M683.8,356.2 v5.2" fill="#fff" stroke="#3c3c3c" stroke-width="0.9"/>
<path d="M676.8,372.4 l7,-2.6 l7,2.6 l-7,2.6 z M683.8,369.8 v5.2" fill="#fff" stroke="#3c3c3c" stroke-width="0.9"/>
<path d="M676.8,386.1 l7,-2.6 l7,2.6 l-7,2.6 z M683.8,383.5 v5.2" fill="#fff" stroke="#3c3c3c" stroke-width="0.9"/>
<path d="M676.8,399.7 l7,-2.6 l7,2.6 l-7,2.6 z M683.8,397.1 v5.2" fill="#fff" stroke="#3c3c3c" stroke-width="0.9"/>
<path d="M676.8,413.4 l7,-2.6 l7,2.6 l-7,2.6 z M683.8,410.8 v5.2" fill="#fff" stroke="#3c3c3c" stroke-width="0.9"/>
<path d="M676.8,427.1 l7,-2.6 l7,2.6 l-7,2.6 z M683.8,424.5 v5.2" fill="#fff" stroke="#3c3c3c" stroke-width="0.9"/>
<path d="M676.8,440.7 l7,-2.6 l7,2.6 l-7,2.6 z M683.8,438.1 v5.2" fill="#fff" stroke="#3c3c3c" stroke-width="0.9"/>
<path d="M676.8,454.4 l7,-2.6 l7,2.6 l-7,2.6 z M683.8,451.8 v5.2" fill="#fff" stroke="#3c3c3c" stroke-width="0.9"/>
<path d="M690.8,481.7 l-7.5,-2.6 v5.2 z" fill="#fff" stroke="#3c3c3c" stroke-width="0.9"/>
<path d="M775.2,345.1 l7,-2.6 l7,2.6 l-7,2.6 z M782.2,342.5 v5.2" fill="#fff" stroke="#3c3c3c" stroke-width="0.9"/>
<path d="M775.2,358.8 l7,-2.6 l7,2.6 l-7,2.6 z M782.2,356.2 v5.2" fill="#fff" stroke="#3c3c3c" stroke-width="0.9"/>
<path d="M775.2,372.4 l7,-2.6 l7,2.6 l-7,2.6 z M782.2,369.8 v5.2" fill="#fff" stroke="#3c3c3c" stroke-width="0.9"/>
<path d="M775.2,386.1 l7,-2.6 l7,2.6 l-7,2.6 z M782.2,383.5 v5.2" fill="#fff" stroke="#3c3c3c" stroke-width="0.9"/>
<path d="M775.2,399.7 l7,-2.6 l7,2.6 l-7,2.6 z M782.2,397.1 v5.2" fill="#fff" stroke="#3c3c3c" stroke-width="0.9"/>
<path d="M775.2,413.4 l7,-2.6 l7,2.6 l-7,2.6 z M782.2,410.8 v5.2" fill="#fff" stroke="#3c3c3c" stroke-width="0.9"/>
<path d="M775.2,427.1 l7,-2.6 l7,2.6 l-7,2.6 z M782.2,424.5 v5.2" fill="#fff" stroke="#3c3c3c" stroke-width="0.9"/>
<path d="M775.2,440.7 l7,-2.6 l7,2.6 l-7,2.6 z M782.2,438.1 v5.2" fill="#fff" stroke="#3c3c3c" stroke-width="0.9"/>
<path d="M775.2,468 l7.5,-2.6 v5.2 z" fill="#fff" stroke="#3c3c3c" stroke-width="0.9"/>
<path d="M775.2,481.7 l7.5,-2.6 v5.2 z" fill="#fff" stroke="#3c3c3c" stroke-width="0.9"/>
<line x1="643" y1="478.8" x2="693" y2="478.8" stroke="#e8a070" stroke-width="0.9"/>
<path d="M707.5,333.6 l-2.6,-7 l2.6,-7 l2.6,7 z M704.9,326.6 h5.2" fill="#fff" stroke="#3c3c3c" stroke-width="0.9"/>
<path d="M723.9,333.6 l-2.6,-7 l2.6,-7 l2.6,7 z M721.3,326.6 h5.2" fill="#fff" stroke="#3c3c3c" stroke-width="0.9"/>
<text transform="translate(705.6,323.5) rotate(-90)" fill="#2a2a2a" font-size="10.6">A7</text>
<text transform="translate(722,323.5) rotate(-90)" fill="#2a2a2a" font-size="10.6">A6</text>
<path d="M763.3,514 l-2.6,7.5 h5.2 z" fill="#fff" stroke="#3c3c3c" stroke-width="0.9"/>
<line x1="759.8" y1="512" x2="759.8" y2="562" stroke="#e8a070" stroke-width="0.9"/>
<text transform="translate(760.8,545) rotate(-90)" fill="#2a2a2a" font-size="10.6">DTR</text>
<text x="733" y="324.2" fill="#1f1f80" font-size="10.75" text-anchor="start">5V Board</text>
<line x1="915.7" y1="433.9" x2="939.5" y2="433.9" stroke="#3c3c3c" stroke-width="1.3"/>
<line x1="981.5" y1="433.9" x2="1004.8" y2="433.9" stroke="#3c3c3c" stroke-width="1.3"/>
<text x="925.5" y="431.5" fill="#2a2a2a" font-size="9.5" text-anchor="start">1</text>
<text x="991" y="431.5" fill="#2a2a2a" font-size="9.5" text-anchor="start">6</text>
<line x1="915.7" y1="448" x2="939.5" y2="448" stroke="#3c3c3c" stroke-width="1.3"/>
<line x1="981.5" y1="448" x2="1004.8" y2="448" stroke="#3c3c3c" stroke-width="1.3"/>
<text x="925.5" y="445.6" fill="#2a2a2a" font-size="9.5" text-anchor="start">2</text>
<text x="991" y="445.6" fill="#2a2a2a" font-size="9.5" text-anchor="start">5</text>
<line x1="915.7" y1="462.1" x2="939.5" y2="462.1" stroke="#3c3c3c" stroke-width="1.3"/>
<line x1="981.5" y1="462.1" x2="1004.8" y2="462.1" stroke="#3c3c3c" stroke-width="1.3"/>
<text x="925.5" y="459.7" fill="#2a2a2a" font-size="9.5" text-anchor="start">3</text>
<text x="991" y="459.7" fill="#2a2a2a" font-size="9.5" text-anchor="start">4</text>
<rect x="939.5" y="429.5" width="42" height="37" fill="#ffffb3" stroke="#a8603c" stroke-width="1.1"/>
<text x="943.8" y="441.8" fill="#2a2a2a" font-size="9.6" text-anchor="start">MQ-131</text>
<text x="920.9" y="417.9" fill="#1f1f80" font-size="10.75" text-anchor="start">MQ-131 Ozone Sensor</text>
<line x1="714.6" y1="621.5" x2="745.6" y2="621.5" stroke="#3c3c3c" stroke-width="1.3"/>
<text x="724" y="619.7" fill="#2a2a2a" font-size="10.6" text-anchor="start">5V</text>
<line x1="714.6" y1="633.3" x2="745.6" y2="633.3" stroke="#3c3c3c" stroke-width="1.3"/>
<text x="724" y="631.5" fill="#2a2a2a" font-size="10.6" text-anchor="start">RX</text>
<line x1="714.6" y1="645.1" x2="745.6" y2="645.1" stroke="#3c3c3c" stroke-width="1.3"/>
<text x="724" y="643.3" fill="#2a2a2a" font-size="10.6" text-anchor="start">TX</text>
<line x1="714.6" y1="656.9" x2="745.6" y2="656.9" stroke="#3c3c3c" stroke-width="1.3"/>
<text x="724" y="655.1" fill="#2a2a2a" font-size="10.6" text-anchor="start">GND</text>
<rect x="690.7" y="617.4" width="23.9" height="43.9" fill="#ffffb3" stroke="#a8603c" stroke-width="1.1"/>
<text x="657.8" y="605.8" fill="#1f1f80" font-size="10.75" text-anchor="start">Pin Header x4 - Display</text>
<line x1="892.2" y1="576.3" x2="930.2" y2="576.3" stroke="#3c3c3c" stroke-width="1.3"/>
<text x="921" y="574.5" fill="#2a2a2a" font-size="10.6" text-anchor="end">HD</text>
<line x1="892.2" y1="588.2" x2="930.2" y2="588.2" stroke="#3c3c3c" stroke-width="1.3"/>
<text x="921" y="586.5" fill="#2a2a2a" font-size="10.6" text-anchor="end">NC</text>
<line x1="892.2" y1="600.2" x2="930.2" y2="600.2" stroke="#3c3c3c" stroke-width="1.3"/>
<text x="921" y="598.4" fill="#2a2a2a" font-size="10.6" text-anchor="end">TX</text>
<line x1="892.2" y1="612.1" x2="930.2" y2="612.1" stroke="#3c3c3c" stroke-width="1.3"/>
<text x="921" y="610.4" fill="#2a2a2a" font-size="10.6" text-anchor="end">RX</text>
<line x1="892.2" y1="624.1" x2="930.2" y2="624.1" stroke="#3c3c3c" stroke-width="1.3"/>
<text x="921" y="622.3" fill="#2a2a2a" font-size="10.6" text-anchor="end">Vo</text>
<line x1="984.5" y1="576.3" x2="1022" y2="576.3" stroke="#3c3c3c" stroke-width="1.3"/>
<text x="993.8" y="574.5" fill="#2a2a2a" font-size="10.6" text-anchor="start">PWM</text>
<line x1="984.5" y1="588.2" x2="1022" y2="588.2" stroke="#3c3c3c" stroke-width="1.3"/>
<text x="993.8" y="586.5" fill="#2a2a2a" font-size="10.6" text-anchor="start">NC</text>
<line x1="984.5" y1="600.2" x2="1022" y2="600.2" stroke="#3c3c3c" stroke-width="1.3"/>
<text x="993.8" y="598.4" fill="#2a2a2a" font-size="10.6" text-anchor="start">GND</text>
<line x1="984.5" y1="612.1" x2="1022" y2="612.1" stroke="#3c3c3c" stroke-width="1.3"/>
<text x="993.8" y="610.4" fill="#2a2a2a" font-size="10.6" text-anchor="start">Vin</text>
<rect x="930.2" y="564.6" width="54.3" height="71.8" fill="#ffffb3" stroke="#a8603c" stroke-width="1.1"/>
<path d="M930.2,576.3 l-7.5,-2.6 v5.2 z" fill="#fff" stroke="#3c3c3c" stroke-width="0.9"/>
<path d="M930.2,612.1 l-7.5,-2.6 v5.2 z" fill="#fff" stroke="#3c3c3c" stroke-width="0.9"/>
<path d="M930.2,597.6 l-7.5,2.6 l7.5,2.6 " fill="#fff" stroke="#3c3c3c" stroke-width="0.9"/>
<path d="M930.2,621.5 l-7.5,2.6 l7.5,2.6 " fill="#fff" stroke="#3c3c3c" stroke-width="0.9"/>
<path d="M984.5,573.7 l7.5,2.6 l-7.5,2.6" fill="#fff" stroke="#3c3c3c" stroke-width="0.9"/>
<text x="906.4" y="554.6" fill="#1f1f80" font-size="10.75" text-anchor="start">MH-Z19B CO2 Sensor</text>
<line x1="1001.5" y1="751.5" x2="1383" y2="751.5" stroke="#4a4a4a" stroke-width="1.1"/>
<line x1="1001.5" y1="786.7" x2="1383" y2="786.7" stroke="#4a4a4a" stroke-width="1.1"/>
<line x1="1001.5" y1="751" x2="1001.5" y2="818" stroke="#4a4a4a" stroke-width="1.1"/>
<line x1="1060" y1="786.7" x2="1060" y2="818" stroke="#4a4a4a" stroke-width="1.1"/>
<line x1="1299.4" y1="786.7" x2="1299.4" y2="818" stroke="#4a4a4a" stroke-width="1.1"/>
<text x="1007.6" y="760.8" fill="#222" font-size="10.6" text-anchor="start">Title</text>
<text x="1043" y="771.6" fill="#101078" font-size="19.33" text-anchor="start">DIY Air Quality Monitor</text>
<text x="1007.3" y="795.9" fill="#222" font-size="10.6" text-anchor="start">Size</text>
<text x="1013.3" y="814.6" fill="#222" font-size="10.6" text-anchor="start">A4</text>
<text x="1066.6" y="795.9" fill="#222" font-size="10.6" text-anchor="start">Number</text>
<text x="1305" y="795.9" fill="#222" font-size="10.6" text-anchor="start">Revision</text>
</svg></div>
<div class="a lp"></div><div class="a" style="left:1px;top:18px;width:253px;height:23px;background:#404040"></div><div class="a lph"></div>
<div class="t" style="left:6px;top:6.8px;font-size:8px;font-weight:bold;color:#f2f2f2;transform:scaleX(.88);transform-origin:0 0">Projects</div>
<svg style="left:224px;top:6.6px" width="30" height="10" viewBox="0 0 30 10"><path d="M2,3 h4.2 l-2.1,3z" fill="#eee"/><path d="M13,2 h2.4 v2.6 h0.9 v1 h-1.7 v2.2 h-0.8 v-2.2 h-1.7 v-1 h0.9z" fill="#eee"/><path d="M22,2.8 l3.6,3.6 M25.6,2.8 l-3.6,3.6" stroke="#eee" stroke-width="1.2" fill="none"/></svg>
<svg style="left:10px;top:25px" width="90" height="14" viewBox="0 0 90 14"><rect x="2.8" y="2.8" width="8" height="8" fill="#7a7a7a"/><rect x="4.2" y="2.8" width="5" height="2.6" fill="#9a9a9a"/><rect x="4.2" y="7.2" width="5" height="3.6" fill="#5a5a5a"/><rect x="5" y="8" width="1.4" height="2.8" fill="#8a8a8a"/><path d="M20,6 l4,-3.5 l4,3.5 v5 h-8z" fill="#e8eef6"/><path d="M20,6 l4,3 l4,-3" fill="none" stroke="#7aa4d4" stroke-width="0.9"/><path d="M22,4.5 h4 v3 h-4z" fill="#9ec1e8"/><path d="M37,2.5 h6 v2 h3 v5 h-4 v-2 h-5z" fill="#7a7a7a"/><path d="M42,9 l3,2 v-4z" fill="#8a8a8a"/><path d="M54,3 h3.5 l1,1.2 h4.5 v6 h-9z" fill="#e6b650"/><circle cx="62.3" cy="9" r="2" fill="#555" stroke="#cfcfcf" stroke-width="0.9"/><line x1="69.5" y1="1.5" x2="69.5" y2="12" stroke="#2a2a2a" stroke-width="1"/><path d="M78.30,2.50 L79.41,2.65 L79.95,3.94 L80.63,4.47 L82.02,4.65 L82.45,5.69 L81.60,6.80 L81.49,7.65 L82.02,8.95 L81.34,9.84 L79.95,9.66 L79.15,9.99 L78.30,11.10 L77.19,10.95 L76.65,9.66 L75.97,9.13 L74.58,8.95 L74.15,7.91 L75.00,6.80 L75.11,5.95 L74.58,4.65 L75.26,3.76 L76.65,3.94 L77.45,3.61z" fill="#d6d6d6"/><circle cx="78.3" cy="6.8" r="1.7" fill="#404040"/></svg>
<div class="a" style="left:8px;top:41px;width:241.7px;height:784px;border:1px solid #303030;border-bottom-color:#2c2c2c"></div>
<div class="a" style="left:12px;top:44.5px;width:233.5px;height:13px;background:#2b2b2b;border-radius:2px"></div>
<svg style="left:16px;top:46.5px" width="9" height="9" viewBox="0 0 9 9"><circle cx="3.6" cy="3.8" r="2.2" fill="none" stroke="#c8c8c8" stroke-width="0.9"/><path d="M5.2,5.5 l2,2.1" stroke="#c8c8c8" stroke-width="1"/></svg>
<div class="t" style="left:28px;top:48px;font-size:7.2px;color:#d8d8d8">Search</div>
<div class="a" style="left:12px;top:61px;width:233.5px;height:1px;background:#333"></div>
<div class="a" style="left:12px;top:78.5px;width:233.5px;height:9.7px;background:#494949"></div>
<div class="a" style="left:43.7px;top:98.3px;width:201.8px;height:9.7px;background:#5a84b0"></div>
<div class="a" style="left:36.7px;top:158.2px;width:208.8px;height:9.5px;border:1px solid #586674"></div>
<svg style="left:12px;top:68.5px" width="10" height="10" viewBox="0 0 10 10"><rect x="0.5" y="0.8" width="6.5" height="7.5" fill="#dfe8f2" stroke="#6f8fb3" stroke-width="0.6"/><rect x="3" y="2.2" width="6.2" height="7.2" fill="#cfe0f0" stroke="#5d86b5" stroke-width="0.6"/><path d="M1.5,2.5 h4 M1.5,4 h3" stroke="#3a78c0" stroke-width="0.7"/></svg>
<div class="t tr" style="left:23px;top:70.4px;color:#f0f0f0;font-weight:bold;letter-spacing:-0.2px;font-size:7.25px">Project Group 1.DsnWrk</div>
<svg style="left:13.5px;top:81.2px" width="5" height="5" viewBox="0 0 5 5"><path d="M4.2,0.6 v3.6 h-3.6z" fill="#ddd"/></svg>
<svg style="left:19.5px;top:78.5px" width="10" height="10" viewBox="0 0 10 10"><rect x="3" y="0.5" width="5" height="5" fill="#e8eef4"/><rect x="0.8" y="3" width="8.4" height="6" fill="#2fae6a"/><rect x="3.2" y="4.6" width="3.4" height="2.8" fill="#dff5e8"/></svg>
<div class="t tr" style="left:30.5px;top:80.4px;color:#f4f4f4;font-weight:bold;letter-spacing:-0.2px;font-size:7.25px">DIY Air Quality Monitor.PrjPcb</div>
<svg style="left:21px;top:91.2px" width="5" height="5" viewBox="0 0 5 5"><path d="M4.2,0.6 v3.6 h-3.6z" fill="#ddd"/></svg>
<svg style="left:27.5px;top:89.3px" width="9" height="8" viewBox="0 0 9 8"><path d="M0.6,1.4 h2.8 l0.8,0.9 h3.8 v4.9 h-7.4z" fill="#93d293"/><path d="M0.6,2.9 h7.4 v4.3 h-7.4z" fill="#aadeaa"/></svg>
<div class="t tr" style="left:38px;top:90.4px;color:#e4e4e4">Source Documents</div>
<svg style="left:34px;top:99px" width="10" height="8" viewBox="0 0 10 8"><rect x="0.3" y="0.5" width="9" height="7" fill="#e9c24e"/><rect x="4.5" y="3.6" width="3.8" height="2.6" fill="#f8efc8"/><rect x="0.3" y="0.5" width="9" height="1.6" fill="#d5a834"/></svg>
<div class="t tr" style="left:45.5px;top:100.4px;color:#ffffff">DIY Air Quality Monitor.SchDoc</div>
<svg style="left:226.5px;top:99px" width="7" height="9" viewBox="0 0 7 9"><path d="M0.8,0.8 h3.4 l2,2 v5.4 h-5.4z M4.2,0.8 v2 h2" fill="none" stroke="#e6eef8" stroke-width="0.8"/></svg>
<svg style="left:34px;top:109px" width="10" height="8" viewBox="0 0 10 8"><rect x="0.3" y="0.5" width="9" height="7" fill="#1a8a5e"/><rect x="1.6" y="1.8" width="2" height="3.6" fill="#e6f6ec"/><rect x="5" y="1.8" width="3.2" height="2" fill="#e6f6ec"/><rect x="5.6" y="5" width="2.8" height="1.2" fill="#bfe8cf"/></svg>
<div class="t tr" style="left:45.5px;top:110.4px;color:#e4e4e4">DIY Air Quality Monitor.PcbDoc *</div>
<svg style="left:226.5px;top:109px" width="7" height="9" viewBox="0 0 7 9"><path d="M0.8,0.8 h3.4 l2,2 v5.4 h-5.4z M4.2,0.8 v2 h2" fill="none" stroke="#c8484c" stroke-width="0.8"/></svg>
<svg style="left:21px;top:121.2px" width="5" height="5" viewBox="0 0 5 5"><path d="M4.2,0.6 v3.6 h-3.6z" fill="#ddd"/></svg>
<svg style="left:27.5px;top:119.3px" width="9" height="8" viewBox="0 0 9 8"><path d="M0.6,1.4 h2.8 l0.8,0.9 h3.8 v4.9 h-7.4z" fill="#93d293"/><path d="M0.6,2.9 h7.4 v4.3 h-7.4z" fill="#aadeaa"/></svg>
<div class="t tr" style="left:38px;top:120.4px;color:#e4e4e4">Libraries</div>
<svg style="left:28.5px;top:130.5px" width="5" height="6" viewBox="0 0 5 6"><path d="M1,0.4 l3,2.6 l-3,2.6z" fill="#ddd"/></svg>
<svg style="left:35px;top:129.3px" width="9" height="8" viewBox="0 0 9 8"><path d="M0.6,1.4 h2.8 l0.8,0.9 h3.8 v4.9 h-7.4z" fill="#93d293"/><path d="M0.6,2.9 h7.4 v4.3 h-7.4z" fill="#aadeaa"/></svg>
<div class="t tr" style="left:45.5px;top:130.4px;color:#e4e4e4">PCB Library Documents</div>
<svg style="left:28.5px;top:140.5px" width="5" height="6" viewBox="0 0 5 6"><path d="M1,0.4 l3,2.6 l-3,2.6z" fill="#ddd"/></svg>
<svg style="left:35px;top:139.3px" width="9" height="8" viewBox="0 0 9 8"><path d="M0.6,1.4 h2.8 l0.8,0.9 h3.8 v4.9 h-7.4z" fill="#93d293"/><path d="M0.6,2.9 h7.4 v4.3 h-7.4z" fill="#aadeaa"/></svg>
<div class="t tr" style="left:45.5px;top:140.4px;color:#e4e4e4">Schematic Library Documents</div>
<svg style="left:21px;top:150.5px" width="5" height="6" viewBox="0 0 5 6"><path d="M1,0.4 l3,2.6 l-3,2.6z" fill="#ddd"/></svg>
<svg style="left:27.5px;top:149.3px" width="9" height="8" viewBox="0 0 9 8"><path d="M0.6,1.4 h2.8 l0.8,0.9 h3.8 v4.9 h-7.4z" fill="#93d293"/><path d="M0.6,2.9 h7.4 v4.3 h-7.4z" fill="#aadeaa"/></svg>
<div class="t tr" style="left:38px;top:150.4px;color:#e4e4e4">Components</div>
<svg style="left:21px;top:160.5px" width="5" height="6" viewBox="0 0 5 6"><path d="M1,0.4 l3,2.6 l-3,2.6z" fill="#ddd"/></svg>
<svg style="left:27.5px;top:159.3px" width="9" height="8" viewBox="0 0 9 8"><path d="M0.6,1.4 h2.8 l0.8,0.9 h3.8 v4.9 h-7.4z" fill="#93d293"/><path d="M0.6,2.9 h7.4 v4.3 h-7.4z" fill="#aadeaa"/></svg>
<div class="t tr" style="left:38px;top:160.4px;color:#e4e4e4">Nets</div>
<div class="a" style="left:255px;top:2px;width:1129px;height:17px;background:#2c2c2c"></div>
<div class="a" style="left:254px;top:18px;width:3px;height:812px;background:#3a3a3a"></div>
<div class="a" style="left:380.2px;top:4.5px;width:115px;height:14.5px;background:#4c4c4c"></div>
<svg style="left:259.5px;top:7.2px" width="9" height="8" viewBox="0 0 9 8"><rect x="0.2" y="0.4" width="8.4" height="7" fill="#17845a"/><rect x="1.4" y="1.6" width="1.8" height="3.6" fill="#e6f6ec"/><rect x="4.6" y="1.6" width="3" height="2" fill="#e6f6ec"/><rect x="5.2" y="4.8" width="2.6" height="1.2" fill="#bfe8cf"/></svg>
<div class="t tab" style="left:272.5px;top:7.9px">DIY Air Quality Monitor.PcbDoc *</div>
<svg style="left:383px;top:7.2px" width="9" height="8" viewBox="0 0 9 8"><rect x="0.2" y="0.4" width="8.4" height="7" fill="#e9c24e"/><rect x="4.2" y="3.4" width="3.6" height="2.6" fill="#f8efc8"/><rect x="0.2" y="0.4" width="8.4" height="1.5" fill="#d5a834"/></svg>
<div class="t tab" style="left:394.8px;top:7.9px;color:#f2f2f2">DIY Air Quality Monitor.SchDoc</div>
<svg style="left:500.5px;top:6.8px" width="10" height="9" viewBox="0 0 10 9"><path d="M1,3 l4,-2 l4,2 l-4,2z" fill="#dfe9f3"/><path d="M1,3 v3 l4,2 v-3z" fill="#9db9d6"/><path d="M9,3 v3 l-4,2 v-3z" fill="#c5d6e8"/><circle cx="3" cy="6" r="1.5" fill="#3a3a3a" stroke="#ddd" stroke-width="0.6"/></svg>
<div class="t tab" style="left:512.5px;top:7.9px">DIY Air Quality Monitor Library.PcbLib</div>
<svg style="left:637.5px;top:6.8px" width="10" height="9" viewBox="0 0 10 9"><rect x="2.4" y="0.5" width="6" height="2.4" fill="#e9c24e"/><rect x="2.4" y="3.1" width="6" height="2.2" fill="#5d9fe0"/><rect x="2.4" y="5.5" width="6" height="2.4" fill="#e0e8f0"/><rect x="0.6" y="1.5" width="2.4" height="5.4" fill="#9ab" /></svg>
<div class="t tab" style="left:650px;top:7.9px">DIY Air Quality Monitor Library.SchLib</div>
<div class="a" style="left:257px;top:18.5px;width:1126px;height:1px;background:#3a3a3a"></div>
<div class="a" style="left:703px;top:21.3px;width:232.5px;height:17.5px;background:#2c2d31;border-radius:2px"></div>
<svg style="left:703px;top:21.3px" width="233" height="18" viewBox="0 0 233 18"><g transform="translate(11.1,8.8)"><path d="M-4,-3.6 h8 l-3,3.4 v3.6 l-2,-1.1 v-2.5z" fill="#6fb6ec"/></g><g transform="translate(28.6,8.8)"><path d="M0,-4.4 v8.8 M-4.4,0 h8.8" stroke="#4d8fe0" stroke-width="1.1"/></g><path d="M33.0,16.2 l2.6,-2.6 v2.6z" fill="#c4c4c4"/><g transform="translate(46.5,8.8)"><rect x="-4.2" y="-4.2" width="8.4" height="8.4" fill="none" stroke="#4a7ed0" stroke-width="0.9" stroke-dasharray="1.5 1"/></g><path d="M50.4,16.2 l2.6,-2.6 v2.6z" fill="#c4c4c4"/><g transform="translate(64,8.8)"><path d="M-3.6,-4 v8 M-2.6,-3 h4.2 v2 h-4.2 M-2.6,0.6 h6.4 v2 h-6.4" stroke="#747474" stroke-width="1" fill="none"/></g><path d="M68.2,16.2 l2.6,-2.6 v2.6z" fill="#c4c4c4"/><line x1="72.9" y1="3" x2="72.9" y2="15" stroke="#1a1a1a" stroke-width="1"/><g transform="translate(81.5,8.8)"><rect x="-2.8" y="-4.3" width="5.6" height="8.6" fill="#f0cf6a"/><path d="M-4.6,-2.6 h1.8 M-4.6,0 h1.8 M-4.6,2.6 h1.8 M2.8,-2.6 h1.8 M2.8,0 h1.8 M2.8,2.6 h1.8" stroke="#c9a63a" stroke-width="0.8"/></g><g transform="translate(99,8.8)"><path d="M-4.4,-1.4 c1.8,-1.6 2.8,1.4 4.6,0 s3,1.2 4,-0.2 M-4.4,2 c1.8,-1.6 2.8,1.4 4.6,0 s3,1.2 4,-0.2" stroke="#4a90e0" stroke-width="1" fill="none"/></g><path d="M103.80000000000001,16.2 l2.6,-2.6 v2.6z" fill="#c4c4c4"/><g transform="translate(116.1,8.8)"><path d="M0,-4.6 v5" stroke="#e0584c" stroke-width="1.3"/><path d="M-4.4,0 h8.8 l-4.4,4.8z" fill="#e0584c"/></g><path d="M120.7,16.2 l2.6,-2.6 v2.6z" fill="#c4c4c4"/><g transform="translate(133.6,8.8)"><rect x="-5" y="-5" width="1.7" height="10" fill="#dbe9fb"/><path d="M-3,0 h8 M0,-1.6 v3.2 M2.6,-1.6 v3.2" stroke="#4a90e0" stroke-width="0.9"/></g><path d="M138.8,16.2 l2.6,-2.6 v2.6z" fill="#c4c4c4"/><g transform="translate(152,8.8)"><rect x="-4.2" y="-3.2" width="8.4" height="6.4" rx="1" fill="#5fd0a8"/><path d="M-5.6,-1.6 h1.4 M-5.6,1.6 h1.4 M4.2,-1.6 h1.4 M4.2,1.6 h1.4" stroke="#8fe4c6" stroke-width="0.8"/></g><path d="M156.6,16.2 l2.6,-2.6 v2.6z" fill="#c4c4c4"/><g transform="translate(168.6,8.8)"><path d="M-4.6,-2.7 h6.4 l2.6,2.7 l-2.6,2.7 h-6.4z" fill="#f2c84a"/><rect x="-2.8" y="-0.8" width="3" height="1.6" fill="#fbeeb5"/></g><path d="M174.1,16.2 l2.6,-2.6 v2.6z" fill="#c4c4c4"/><g transform="translate(186.5,8.8)"><circle cx="0.6" cy="0" r="3.6" fill="none" stroke="#c8453f" stroke-width="1"/><path d="M0.6,-2 v2.8 M-5,0 h2" stroke="#c8453f" stroke-width="1"/></g><path d="M191.6,16.2 l2.6,-2.6 v2.6z" fill="#c4c4c4"/><text x="198.8" y="13.6" font-family="Liberation Serif" font-weight="bold" font-size="13" fill="#4a90e0">A</text><path d="M209.1,16.2 l2.6,-2.6 v2.6z" fill="#c4c4c4"/><g transform="translate(221.5,8.8)"><path d="M-4.8,2.6 a5,5 0 0 1 9,-2" stroke="#3c4f7a" stroke-width="1.1" fill="none"/></g><path d="M227.5,16.2 l2.6,-2.6 v2.6z" fill="#c4c4c4"/></svg>
<div class="a" style="left:257px;top:817px;width:1127px;height:13px;background:#2e2e2e"></div>
<div class="a" style="left:257px;top:817px;width:26px;height:13px;background:#3c3c3c"></div>
<div class="a" style="left:283px;top:817px;width:83px;height:13px;background:#434343"></div>
<div class="t" style="left:261px;top:820.4px;font-size:7px;font-weight:bold;color:#fff">Editor</div>
<div class="t" style="left:289px;top:820.4px;font-size:7.1px;color:#cfcfcf">DIY Air Quality Monitor</div>
<div class="a" style="left:0;top:830px;width:1600px;height:9px;background:#3d3d3d"></div>
<div class="t" style="left:5px;top:835.2px;font-size:7px;color:#d0d0d0">X:280.0mm Y:127.0mm&nbsp;&nbsp;&nbsp; Grid:1mm</div>
<div class="a" style="left:1383px;top:4px;width:2px;height:826px;background:#2a2a2a"></div>
<div class="a rp"></div><div class="a rph"></div>
<div class="t" style="left:1388px;top:6.8px;font-size:8px;font-weight:bold;color:#fff;transform:scaleX(.94);transform-origin:0 0">Manufacturer Part Search</div>
<svg style="left:1568px;top:6.6px" width="30" height="10" viewBox="0 0 30 10"><path d="M3.4,3 h4.2 l-2.1,3z" fill="#fff"/><path d="M14,2 h2.4 v2.6 h0.9 v1 h-1.7 v2.2 h-0.8 v-2.2 h-1.7 v-1 h0.9z" fill="#fff"/><path d="M23,2.8 l3.6,3.6 M26.6,2.8 l-3.6,3.6" stroke="#fff" stroke-width="1.2" fill="none"/></svg>
<div class="a" style="left:1390px;top:24.4px;width:16px;height:13.8px;background:#4f4f4f;border:1px solid #383838"></div>
<svg style="left:1393px;top:26.5px" width="10" height="10" viewBox="0 0 10 10"><ellipse cx="5" cy="2.6" rx="3.3" ry="1.4" fill="none" stroke="#fff" stroke-width="1"/><path d="M2,3.4 l2.4,2.6 v3 h1.2 v-3 l2.4,-2.6z" fill="#fff"/></svg>
<div class="a" style="left:1412.8px;top:24.4px;width:129px;height:13.8px;background:linear-gradient(#585858,#474747);border:1px solid #333;border-radius:1px"></div>
<svg style="left:1416.5px;top:26.5px" width="9" height="9" viewBox="0 0 9 9"><path d="M1,0.8 h5 v5 h-5z" fill="#8d8d8d"/><path d="M3,3 h5 v5 l-2,-1.6 h-3z" fill="#a9a9a9"/></svg>
<div class="t" style="left:1427px;top:27.6px;font-size:7.3px;color:#f0f0f0">All</div>
<svg style="left:1532.5px;top:29.5px" width="6" height="4" viewBox="0 0 6 4"><path d="M0.4,0.5 h5 l-2.5,3z" fill="#f0f0f0"/></svg>
<div class="a" style="left:1549px;top:24.4px;width:44.8px;height:13.8px;background:#3a3a3a;border:1px solid #383838"></div>
<div class="t" style="left:1563.3px;top:27.6px;font-size:7.3px;color:#858585">Place</div>
<div class="a" style="left:1389.8px;top:44.6px;width:182px;height:14px;background:#2a2a2a;border-radius:2px"></div>
<svg style="left:1394.5px;top:47.5px" width="9" height="9" viewBox="0 0 9 9"><circle cx="3.5" cy="3.5" r="2.3" fill="none" stroke="#c8c8c8" stroke-width="0.9"/><path d="M5.1,5.2 l2.2,2.3" stroke="#c8c8c8" stroke-width="1.1"/></svg>
<div class="t" style="left:1406.5px;top:47.9px;font-size:7.3px;color:#e0e0e0">Search</div>
<svg style="left:1562.5px;top:49.8px" width="6" height="4" viewBox="0 0 6 4"><path d="M0.4,0.5 h5 l-2.5,3z" fill="#f0f0f0"/></svg>
<div class="a" style="left:1578px;top:44.2px;width:16px;height:14.4px;background:#4f4f4f;border:1px solid #383838"></div>
<svg style="left:1581px;top:47.1px" width="9" height="9" viewBox="0 0 9 9"><path d="M4.50,0.40 L5.56,0.54 L5.95,1.99 L6.55,2.45 L8.05,2.45 L8.46,3.44 L7.40,4.50 L7.30,5.25 L8.05,6.55 L7.40,7.40 L5.95,7.01 L5.25,7.30 L4.50,8.60 L3.44,8.46 L3.05,7.01 L2.45,6.55 L0.95,6.55 L0.54,5.56 L1.60,4.50 L1.70,3.75 L0.95,2.45 L1.60,1.60 L3.05,1.99 L3.75,1.70z" fill="#fff"/><circle cx="4.5" cy="4.5" r="1.15" fill="#4f4f4f"/></svg>
<div class="a" style="left:1390px;top:65.4px;width:204px;height:11.6px;background:#434343;border-radius:2px"></div>
<div class="t" style="left:1392px;top:67.3px;font-size:7.3px;color:#d8d8d8;border-bottom:1px dotted #9fb7d4;padding-bottom:0.6px">mini usb</div>
<svg style="left:1422.5px;top:67.8px" width="7" height="7" viewBox="0 0 7 7"><path d="M1,1 l4.4,4.4 M5.4,1 l-4.4,4.4" stroke="#f4f4f4" stroke-width="1.3"/></svg>
<div class="a" style="left:1389.8px;top:81.5px;width:204.4px;height:476.5px;border:1px solid #2f2f2f"></div>
<div class="a" style="left:1390.5px;top:82.2px;width:203px;height:11.3px;background:#414141"></div>
<div class="a" style="left:1390.5px;top:93.5px;width:203px;height:1px;background:#303030"></div>
<div class="t" style="left:1393.7px;top:85px;font-size:7.25px;color:#dadada">Manufacturer Part</div>
<div class="t" style="left:1541.8px;top:85px;font-size:7.25px;color:#dadada">Description</div>
<div class="a" style="left:1515px;top:83px;width:1px;height:10px;background:#303030"></div>
<div class="a" style="left:1537.5px;top:83px;width:1px;height:10px;background:#303030"></div>
<div class="a" style="left:1390.5px;top:94.5px;width:203px;height:440px;overflow:hidden">
<div class="a" style="left:3.2px;top:3.5px;width:40.3px;height:30px;background:#fdfdfd;border-radius:2px"></div>
<svg style="left:3.2px;top:3.5px;filter:blur(0.3px)" width="40" height="30" viewBox="0 0 40 30"><path d="M7,13 l17,-7 l9,3 v9 l-17,7 l-9,-4z" fill="#2a2418"/><path d="M8,12 l16,-6.5 l8,3 l-16,6.5z" fill="#c9a23a"/><path d="M10,15 l12,4 v5 l-12,-5z" fill="#111"/><path d="M24,15 l8,-3.5 v6 l-8,3.5z" fill="#8a7430"/></svg>
<div class="t pn" style="left:51.0px;top:4.7px">67503-1020</div>
<div class="t mf" style="left:51.0px;top:14.6px">Molex</div>
<div class="a" style="left:123.3px;top:3.5px;width:2px;height:30px;background:#5eb562"></div>
<svg style="left:129.29999999999995px;top:11.8px" width="11.4" height="13.6" viewBox="0 0 10 13" preserveAspectRatio="none"><rect x="2.6" y="1.6" width="4.8" height="9.8" rx="0.8" fill="none" stroke="#58c05c" stroke-width="1.15"/><path d="M0.8,3.3 h1.8 M0.8,5.4 h1.8 M0.8,7.6 h1.8 M0.8,9.7 h1.8 M7.4,3.3 h1.8 M7.4,5.4 h1.8 M7.4,7.6 h1.8 M7.4,9.7 h1.8" stroke="#58c05c" stroke-width="1"/></svg>
<div class="ds" style="left:151.2px;top:4.9px">USB Connector, 5 Contact(s)<br>Right Angle, Solder<br>Terminal, Receptacle</div>
<div class="a" style="left:3.2px;top:41.0px;width:40.3px;height:30px;background:#fdfdfd;border-radius:2px"></div>
<svg style="left:3.2px;top:41.0px;filter:blur(0.3px)" width="40" height="30" viewBox="0 0 40 30"><path d="M9,13 l15,-5 l8,3 v8 l-15,5 l-8,-3z" fill="#8e9499"/><path d="M9,13 l15,-5 l8,3 l-15,5z" fill="#c7ccd1"/><path d="M19,17 l10,-3.5 v4 l-10,3.5z" fill="#23272c"/><path d="M9,13 l8,3 v8 l-8,-3z" fill="#a4abb1"/></svg>
<div class="t pn" style="left:51.0px;top:42.2px">1734035-2</div>
<div class="t mf" style="left:51.0px;top:52.1px">TE Connectivity</div>
<div class="a" style="left:123.3px;top:41.0px;width:2px;height:30px;background:#5eb562"></div>
<svg style="left:129.29999999999995px;top:49.33999999999999px" width="11.4" height="13.6" viewBox="0 0 10 13" preserveAspectRatio="none"><rect x="2.6" y="1.6" width="4.8" height="9.8" rx="0.8" fill="none" stroke="#58c05c" stroke-width="1.15"/><path d="M0.8,3.3 h1.8 M0.8,5.4 h1.8 M0.8,7.6 h1.8 M0.8,9.7 h1.8 M7.4,3.3 h1.8 M7.4,5.4 h1.8 M7.4,7.6 h1.8 M7.4,9.7 h1.8" stroke="#58c05c" stroke-width="1"/></svg>
<div class="ds" style="left:151.2px;top:42.4px">USB Connector, 5 Contact(s)<br>Right Angle, Solder<br>Terminal, Locking</div>
<div class="a" style="left:3.2px;top:78.6px;width:40.3px;height:30px;background:#fdfdfd;border-radius:2px"></div>
<svg style="left:3.2px;top:78.6px;filter:blur(0.3px)" width="40" height="30" viewBox="0 0 40 30"><path d="M13,12 l10,-3 l6,2 v6 l-10,3 l-6,-2z" fill="#d9d28a"/><path d="M13,12 l10,-3 l6,2 l-10,3z" fill="#f0ecc0"/><path d="M16,16 l6,2 v1.5 l-6,-2z" fill="#8a8350"/></svg>
<div class="t pn" style="left:51.0px;top:79.8px">67803-8020</div>
<div class="t mf" style="left:51.0px;top:89.7px">Molex</div>
<div class="a" style="left:123.3px;top:78.6px;width:2px;height:30px;background:#5eb562"></div>
<svg style="left:129.29999999999995px;top:86.87999999999998px" width="11.4" height="13.6" viewBox="0 0 10 13" preserveAspectRatio="none"><rect x="2.6" y="1.6" width="4.8" height="9.8" rx="0.8" fill="none" stroke="#58c05c" stroke-width="1.15"/><path d="M0.8,3.3 h1.8 M0.8,5.4 h1.8 M0.8,7.6 h1.8 M0.8,9.7 h1.8 M7.4,3.3 h1.8 M7.4,5.4 h1.8 M7.4,7.6 h1.8 M7.4,9.7 h1.8" stroke="#58c05c" stroke-width="1"/></svg>
<div class="ds" style="left:151.2px;top:80.0px">USB Connector, 5 Contact(s)<br>Right Angle, Solder<br>Terminal, Locking</div>
<div class="a" style="left:3.2px;top:116.1px;width:40.3px;height:30px;background:#fdfdfd;border-radius:2px"></div>
<svg style="left:3.2px;top:116.1px;filter:blur(0.3px)" width="40" height="30" viewBox="0 0 40 30"><path d="M9,12 l14,-5 l9,3 v9 l-14,5 l-9,-4z" fill="#8e7a2c"/><path d="M9,12 l14,-5 l9,3 l-14,5z" fill="#c9aa3c"/><path d="M10,18 l8,3 v3 l-8,-3.5z" fill="#d8d4c8"/><path d="M18,15.5 l14,-5 v8 l-14,5z" fill="#a88e30"/></svg>
<div class="t pn" style="left:51.0px;top:117.3px">65100516121</div>
<div class="t mf" style="left:51.0px;top:127.2px">Wurth Electronics</div>
<div class="a" style="left:123.3px;top:116.1px;width:2px;height:30px;background:#5eb562"></div>
<svg style="left:129.29999999999995px;top:124.42px" width="11.4" height="13.6" viewBox="0 0 10 13" preserveAspectRatio="none"><rect x="2.6" y="1.6" width="4.8" height="9.8" rx="0.8" fill="none" stroke="#58c05c" stroke-width="1.15"/><path d="M0.8,3.3 h1.8 M0.8,5.4 h1.8 M0.8,7.6 h1.8 M0.8,9.7 h1.8 M7.4,3.3 h1.8 M7.4,5.4 h1.8 M7.4,7.6 h1.8 M7.4,9.7 h1.8" stroke="#58c05c" stroke-width="1"/></svg>
<div class="ds" style="left:151.2px;top:117.5px">USB Connector, 5 Contact(s)<br>Right Angle, Solder<br>Terminal, Locking</div>
<div class="a" style="left:0;top:150.1px;width:195px;height:37.3px;background:#5b84b0"></div>
<div class="a" style="left:3.2px;top:153.7px;width:40.3px;height:30px;background:#fdfdfd;border-radius:2px"></div>
<svg style="left:3.2px;top:153.7px;filter:blur(0.3px)" width="40" height="30" viewBox="0 0 40 30"><path d="M8,11 l16,-3 l8,2 v10 l-16,4 l-8,-3z" fill="#9a9da0"/><path d="M8,11 l16,-3 l8,2 l-16,3.5z" fill="#d5d7d9"/><path d="M16,14.5 l14,-3.3 v6.5 l-14,3.6z" fill="#1c1d20"/><path d="M8,11 l8,2.5 v10 l-8,-3z" fill="#b4b7ba"/><path d="M9,21 v4 M15,23 v3" stroke="#888" stroke-width="1"/></svg>
<div class="t pn" style="left:51.0px;top:154.9px;color:#eef4fc">54819-0519</div>
<div class="t mf" style="left:51.0px;top:164.8px">Molex</div>
<div class="t" style="left:51.0px;top:175.3px;font-size:7.1px;color:#e8f0fa;border-bottom:1px dotted #b8cce2">19 SPNs</div>
<svg style="left:77.8px;top:177.3px" width="5" height="4" viewBox="0 0 5 4"><path d="M0.4,0.5 h4 l-2,2.6z" fill="#fff"/></svg>
<div class="a" style="left:123.3px;top:153.7px;width:2px;height:30px;background:#5eb562"></div>
<div class="ds" style="left:151.2px;top:155.1px">USB Connector, 5 Contact(s)<br>Right Angle, Solder<br>Locking, Receptacle</div>
<div class="a" style="left:3.2px;top:191.2px;width:40.3px;height:30px;background:#fdfdfd;border-radius:2px"></div>
<svg style="left:3.2px;top:191.2px;filter:blur(0.3px)" width="40" height="30" viewBox="0 0 40 30"><path d="M17,14 l5,-1.5 l3,1 v3 l-5,1.5 l-3,-1z" fill="#3a3a3a"/><path d="M17,14 l5,-1.5 l3,1 l-5,1.5z" fill="#777"/></svg>
<div class="t pn" style="left:51.0px;top:192.4px">56579-0576</div>
<div class="t mf" style="left:51.0px;top:202.3px">Molex</div>
<div class="a" style="left:123.3px;top:191.2px;width:2px;height:30px;background:#5eb562"></div>
<svg style="left:129.29999999999995px;top:199.5px" width="11.4" height="13.6" viewBox="0 0 10 13" preserveAspectRatio="none"><rect x="2.6" y="1.6" width="4.8" height="9.8" rx="0.8" fill="none" stroke="#58c05c" stroke-width="1.15"/><path d="M0.8,3.3 h1.8 M0.8,5.4 h1.8 M0.8,7.6 h1.8 M0.8,9.7 h1.8 M7.4,3.3 h1.8 M7.4,5.4 h1.8 M7.4,7.6 h1.8 M7.4,9.7 h1.8" stroke="#58c05c" stroke-width="1"/></svg>
<div class="ds" style="left:151.2px;top:192.6px">USB Connector, 5 Contact(s)<br>Right Angle, Solder<br>Terminal, Locking</div>
<div class="a" style="left:3.2px;top:228.7px;width:40.3px;height:30px;background:#fdfdfd;border-radius:2px"></div>
<svg style="left:3.2px;top:228.7px;filter:blur(0.3px)" width="40" height="30" viewBox="0 0 40 30"><path d="M13,12 l9,-3 l6,2.4 v6 l-9,3 l-6,-2.4z" fill="#7a6620"/><path d="M13,12 l9,-3 l6,2.4 l-9,3z" fill="#c9a83c"/><path d="M19,15 l9,-3 v5.4 l-9,3z" fill="#3a3018"/></svg>
<div class="t pn" style="left:51.0px;top:229.9px">651305142821</div>
<div class="t mf" style="left:51.0px;top:239.8px">Wurth Electronics</div>
<div class="a" style="left:123.3px;top:228.7px;width:2px;height:30px;background:#5eb562"></div>
<svg style="left:129.29999999999995px;top:237.04000000000002px" width="11.4" height="13.6" viewBox="0 0 10 13" preserveAspectRatio="none"><rect x="2.6" y="1.6" width="4.8" height="9.8" rx="0.8" fill="none" stroke="#58c05c" stroke-width="1.15"/><path d="M0.8,3.3 h1.8 M0.8,5.4 h1.8 M0.8,7.6 h1.8 M0.8,9.7 h1.8 M7.4,3.3 h1.8 M7.4,5.4 h1.8 M7.4,7.6 h1.8 M7.4,9.7 h1.8" stroke="#58c05c" stroke-width="1"/></svg>
<div class="ds" style="left:151.2px;top:230.1px">USB Connector, 5 Contact(s)<br>Right Angle, Solder<br>Terminal, Locking</div>
<div class="a" style="left:3.2px;top:266.3px;width:40.3px;height:30px;background:#fdfdfd;border-radius:2px"></div>
<svg style="left:3.2px;top:266.3px;filter:blur(0.3px)" width="40" height="30" viewBox="0 0 40 30"><path d="M13,14 l8,-5 l7,3 v5 l-8,5 l-7,-3z" fill="#55585c"/><path d="M13,14 l8,-5 l7,3 l-8,5z" fill="#b9bcc0"/><path d="M15,14.2 l6,-3.8 l4.5,2 l-6,3.8z" fill="#222"/></svg>
<div class="t pn" style="left:51.0px;top:267.5px">651005136421</div>
<div class="t mf" style="left:51.0px;top:277.4px">Wurth Electronics</div>
<div class="a" style="left:123.3px;top:266.3px;width:2px;height:30px;background:#5eb562"></div>
<svg style="left:129.29999999999995px;top:274.58px" width="11.4" height="13.6" viewBox="0 0 10 13" preserveAspectRatio="none"><rect x="2.6" y="1.6" width="4.8" height="9.8" rx="0.8" fill="none" stroke="#58c05c" stroke-width="1.15"/><path d="M0.8,3.3 h1.8 M0.8,5.4 h1.8 M0.8,7.6 h1.8 M0.8,9.7 h1.8 M7.4,3.3 h1.8 M7.4,5.4 h1.8 M7.4,7.6 h1.8 M7.4,9.7 h1.8" stroke="#58c05c" stroke-width="1"/></svg>
<div class="ds" style="left:151.2px;top:267.7px">USB Connector, 5 Contact(s)<br>Straight, Solder<br>Receptacle</div>
<div class="a" style="left:3.2px;top:303.8px;width:40.3px;height:30px;background:#fdfdfd;border-radius:2px"></div>
<svg style="left:3.2px;top:303.8px;filter:blur(0.3px)" width="40" height="30" viewBox="0 0 40 30"><path d="M9,13 l14,-6 l9,3 v9 l-14,6 l-9,-3.5z" fill="#8b8f94"/><path d="M9,13 l14,-6 l9,3 l-14,6z" fill="#c8ccd0"/><path d="M18,16.5 l14,-6 v6 l-14,6z" fill="#5d6166"/><path d="M22,17 l8,-3.4 v3 l-8,3.4z" fill="#1e2024"/><path d="M14,12 l6,-2.4 l3,1.2 l-6,2.4z" fill="#666"/></svg>
<div class="t pn" style="left:51.0px;top:305.0px">10033526-N3212LF</div>
<div class="t mf" style="left:51.0px;top:314.9px">Amphenol FCI</div>
<div class="a" style="left:123.3px;top:303.8px;width:2px;height:30px;background:#5eb562"></div>
<svg style="left:129.29999999999995px;top:312.12px" width="11.4" height="13.6" viewBox="0 0 10 13" preserveAspectRatio="none"><rect x="2.6" y="1.6" width="4.8" height="9.8" rx="0.8" fill="none" stroke="#58c05c" stroke-width="1.15"/><path d="M0.8,3.3 h1.8 M0.8,5.4 h1.8 M0.8,7.6 h1.8 M0.8,9.7 h1.8 M7.4,3.3 h1.8 M7.4,5.4 h1.8 M7.4,7.6 h1.8 M7.4,9.7 h1.8" stroke="#58c05c" stroke-width="1"/></svg>
<div class="ds" style="left:151.2px;top:305.2px">USB Connector, 5 Contact(s)<br>Right Angle, Solder<br>Terminal, Locking</div>
<div class="a" style="left:3.2px;top:341.4px;width:40.3px;height:30px;background:#fdfdfd;border-radius:2px"></div>
<svg style="left:3.2px;top:341.4px;filter:blur(0.3px)" width="40" height="30" viewBox="0 0 40 30"><rect x="7" y="8" width="26" height="13" rx="2" fill="#3c3e2c"/><rect x="10" y="10.5" width="20" height="8" rx="1" fill="#60634a"/><rect x="15" y="12" width="10" height="4.5" fill="#1a1a14"/><path d="M14,23 h12" stroke="#333" stroke-width="1.5"/></svg>
<div class="t pn" style="left:51.0px;top:342.6px">MUSBB15134</div>
<div class="t mf" style="left:51.0px;top:352.5px">Amphenol Commer...</div>
<div class="a" style="left:123.3px;top:341.4px;width:2px;height:30px;background:#5eb562"></div>
<svg style="left:129.29999999999995px;top:349.66px" width="11.4" height="13.6" viewBox="0 0 10 13" preserveAspectRatio="none"><rect x="2.6" y="1.6" width="4.8" height="9.8" rx="0.8" fill="none" stroke="#58c05c" stroke-width="1.15"/><path d="M0.8,3.3 h1.8 M0.8,5.4 h1.8 M0.8,7.6 h1.8 M0.8,9.7 h1.8 M7.4,3.3 h1.8 M7.4,5.4 h1.8 M7.4,7.6 h1.8 M7.4,9.7 h1.8" stroke="#58c05c" stroke-width="1"/></svg>
<div class="ds" style="left:151.2px;top:342.8px">CONN RCPT USB<br><br></div>
<div class="a" style="left:3.2px;top:378.9px;width:40.3px;height:30px;background:#fdfdfd;border-radius:2px"></div>
<svg style="left:3.2px;top:378.9px;filter:blur(0.3px)" width="40" height="30" viewBox="0 0 40 30"><path d="M15,14 l6,-2 l4,1.4 v4 l-6,2 l-4,-1.4z" fill="#c9c6b0"/><path d="M17,15.6 l5,-1.6 v2.6 l-5,1.6z" fill="#222"/></svg>
<div class="t pn" style="left:51.0px;top:380.1px">MUSB-05-S-B-SM-A</div>
<div class="t mf" style="left:51.0px;top:390.0px">Samtec</div>
<div class="a" style="left:123.3px;top:378.9px;width:2px;height:30px;background:#5eb562"></div>
<svg style="left:129.29999999999995px;top:387.2px" width="11.4" height="13.6" viewBox="0 0 10 13" preserveAspectRatio="none"><rect x="2.6" y="1.6" width="4.8" height="9.8" rx="0.8" fill="none" stroke="#58c05c" stroke-width="1.15"/><path d="M0.8,3.3 h1.8 M0.8,5.4 h1.8 M0.8,7.6 h1.8 M0.8,9.7 h1.8 M7.4,3.3 h1.8 M7.4,5.4 h1.8 M7.4,7.6 h1.8 M7.4,9.7 h1.8" stroke="#58c05c" stroke-width="1"/></svg>
<div class="ds" style="left:151.2px;top:380.3px">USB Connector, 5 Contact(s)<br>Right Angle, Solder<br>Terminal, Locking</div>
<div class="a" style="left:3.2px;top:416.4px;width:40.3px;height:30px;background:#fdfdfd;border-radius:2px"></div>
<svg style="left:3.2px;top:416.4px;filter:blur(0.3px)" width="40" height="30" viewBox="0 0 40 30"><path d="M9,13 l14,-4 l9,3 v8 l-14,5 l-9,-4z" fill="#3e4044"/><path d="M9,13 l14,-4 l9,3 l-14,4z" fill="#808488"/><path d="M18,16.2 l14,-4 v6 l-14,5z" fill="#18191c"/><path d="M9,13 l9,3 v9 l-9,-4z" fill="#5a5d62"/></svg>
<div class="t pn" style="left:51.0px;top:417.6px">UX60SC-MB-5ST(80)</div>
<div class="t mf" style="left:51.0px;top:427.5px">Hirose</div>
<div class="a" style="left:123.3px;top:416.4px;width:2px;height:30px;background:#5eb562"></div>
<svg style="left:129.29999999999995px;top:424.74px" width="11.4" height="13.6" viewBox="0 0 10 13" preserveAspectRatio="none"><rect x="2.6" y="1.6" width="4.8" height="9.8" rx="0.8" fill="none" stroke="#58c05c" stroke-width="1.15"/><path d="M0.8,3.3 h1.8 M0.8,5.4 h1.8 M0.8,7.6 h1.8 M0.8,9.7 h1.8 M7.4,3.3 h1.8 M7.4,5.4 h1.8 M7.4,7.6 h1.8 M7.4,9.7 h1.8" stroke="#58c05c" stroke-width="1"/></svg>
<div class="ds" style="left:151.2px;top:417.8px">Telecom and Datacom<br>Contact(s), Female<br>Surface Mount</div>
</div>
<div class="a" style="left:1585.6px;top:94.5px;width:8px;height:440px;background:#3d3d3d"></div>
<div class="a" style="left:1588.3px;top:104.3px;width:3.4px;height:81.6px;background:#6c6c6c;border-radius:1.5px"></div>
<svg style="left:1587.5px;top:97.5px" width="5" height="4" viewBox="0 0 5 4"><path d="M0.4,3.2 h4.2 l-2.1,-2.8z" fill="#777"/></svg>
<svg style="left:1587.5px;top:528px" width="5" height="4" viewBox="0 0 5 4"><path d="M0.4,0.6 h4.2 l-2.1,2.8z" fill="#777"/></svg>
<div class="a" style="left:1390.5px;top:534.5px;width:203px;height:8.5px;background:#3d3d3d"></div>
<div class="a" style="left:1400.6px;top:536.5px;width:64.5px;height:4.4px;background:#5f5f5f;border-radius:2px"></div>
<svg style="left:1393.5px;top:536.3px" width="4" height="5" viewBox="0 0 4 5"><path d="M3.4,0.4 v4.2 l-2.8,-2.1z" fill="#777"/></svg>
<svg style="left:1578.5px;top:536.3px" width="4" height="5" viewBox="0 0 4 5"><path d="M0.6,0.4 v4.2 l2.8,-2.1z" fill="#777"/></svg>
<div class="a" style="left:1390.5px;top:544.6px;width:203px;height:13px;background:#444"></div>
<div class="t" style="left:1394.9px;top:548.2px;font-size:7.2px;color:#7c7c7c">Results: 2733</div>
<div class="a" style="left:1390.3px;top:565.5px;width:203.5px;height:14.8px;background:#515151"></div>
<div class="a" style="left:1590.3px;top:565.5px;width:3.5px;height:14.8px;background:#58c060"></div>
<svg style="left:1392.2px;top:566.5px" width="11.4" height="13.6" viewBox="0 0 10 13" preserveAspectRatio="none"><rect x="2.6" y="1.6" width="4.8" height="9.8" rx="0.8" fill="none" stroke="#f0a030" stroke-width="1.15"/><path d="M0.8,3.3 h1.8 M0.8,5.4 h1.8 M0.8,7.6 h1.8 M0.8,9.7 h1.8 M7.4,3.3 h1.8 M7.4,5.4 h1.8 M7.4,7.6 h1.8 M7.4,9.7 h1.8" stroke="#f0a030" stroke-width="1"/></svg>
<svg style="left:1502px;top:568.3px" width="8" height="8" viewBox="0 0 8 8"><path d="M0.8,2.4 l3.2,-1.6 l3.2,1.6 v3.4 l-3.2,1.6 l-3.2,-1.6z" fill="none" stroke="#58c060" stroke-width="0.8"/><path d="M4,3.2 v1.6" stroke="#58c060" stroke-width="0.8"/></svg>
<div class="t" style="left:1513.3px;top:570px;font-size:7.2px;color:#58c060">120k&nbsp; $1.16 (each)</div>
<svg style="left:1574px;top:568.8px" width="7" height="8" viewBox="0 0 7 8"><path d="M0.8,0.8 l2.7,2.6 l2.7,-2.6 M0.8,4 l2.7,2.6 l2.7,-2.6" stroke="#e0e0e0" stroke-width="1" fill="none"/></svg>
<div class="a" style="left:1390.3px;top:580.3px;width:203.5px;height:112px;background:#454545"></div>
<div class="a" style="left:1398px;top:586.8px;width:57px;height:39px;background:#fdfdfd;border-radius:2px"></div>
<svg style="left:1398px;top:586.8px" width="57" height="39" viewBox="0 -1 40 28"><path d="M8,11 l16,-3 l8,2 v10 l-16,4 l-8,-3z" fill="#9a9da0"/><path d="M8,11 l16,-3 l8,2 l-16,3.5z" fill="#d5d7d9"/><path d="M16,14.5 l14,-3.3 v6.5 l-14,3.6z" fill="#1c1d20"/><path d="M8,11 l8,2.5 v10 l-8,-3z" fill="#b4b7ba"/><path d="M9,21 v4 M15,23 v3" stroke="#888" stroke-width="1"/></svg>
<div class="t pn" style="left:1461.6px;top:589.4px">54819-0519</div>
<div class="ds" style="left:1461.6px;top:597.6px;line-height:8.05px;letter-spacing:-0.08px">Molex<br>USB Connector, 5 Contact(s), Female,<br>Right Angle, Solder Terminal,<br>Locking, Receptacle</div>
<div class="t mf" style="left:1398.2px;top:639.4px">Manufacturer Part Num...</div>
<div class="t mf" style="left:1485px;top:639.4px">54819-0519</div>
<div class="t mf" style="left:1398.2px;top:652.2px">Manufacturer</div>
<div class="t mf" style="left:1485px;top:652.2px">Molex</div>
<div class="t mf" style="left:1398.2px;top:665.2px">Category</div>
<div class="t mf" style="left:1485px;top:665.2px">FFC / FPC</div>
<div class="t" style="left:1398.2px;top:679.6px;font-size:7.2px;color:#6aa5e4;border-bottom:1px dotted #6aa5e4">Show More</div>
<svg style="left:1436px;top:681.6px" width="5" height="4" viewBox="0 0 5 4"><path d="M0.4,0.5 h4 l-2,2.6z" fill="#6aa5e4"/></svg>
<div class="a" style="left:1584.7px;top:594.8px;width:3.4px;height:75.7px;background:#747474;border-radius:1.4px"></div>
<svg style="left:1584px;top:587px" width="5" height="4" viewBox="0 0 5 4"><path d="M0.4,3.2 h4.2 l-2.1,-2.8z" fill="#777"/></svg>
<svg style="left:1584px;top:801.5px" width="5" height="4" viewBox="0 0 5 4"><path d="M0.4,0.6 h4.2 l-2.1,2.8z" fill="#777"/></svg>
<svg style="left:1392.5px;top:700.3px" width="5" height="5" viewBox="0 0 5 5"><path d="M4.2,0.6 v3.6 h-3.6z" fill="#ddd"/></svg>
<div class="t" style="left:1399px;top:699.4px;font-size:7.2px;font-weight:bold;color:#f0f0f0">Models</div>
<div class="a" style="left:1396.5px;top:715.3px;width:182.2px;height:93px;background:#fdfdfb;border-radius:3px 3px 0 0"></div>
<svg style="left:1478.8px;top:752px" width="18" height="18" viewBox="0 0 18 18"><rect x="4" y="4" width="10" height="10" fill="none" stroke="#8e8e8e" stroke-width="1.2"/><path d="M5.5,1 v3 M7.8,1 v3 M10.2,1 v3 M12.5,1 v3 M5.5,14 v3 M7.8,14 v3 M10.2,14 v3 M12.5,14 v3 M1,5.5 h3 M1,7.8 h3 M1,10.2 h3 M1,12.5 h3 M14,5.5 h3 M14,7.8 h3 M14,10.2 h3 M14,12.5 h3" stroke="#9a9a9a" stroke-width="0.8"/></svg>
<div class="t" style="left:1451.5px;top:777.8px;font-size:7.2px;color:#8c8c8c">Symbol is not present</div>
<div class="a" style="left:1390px;top:694.5px;width:204px;height:116.5px;border:1px solid #333;border-top:none"></div>
<div class="a" style="left:1384.5px;top:816.8px;width:215.5px;height:13.2px;background:#2e2e2e"></div>
<div class="a" style="left:1385px;top:817px;width:49.3px;height:11.6px;background:#353535"></div>
<div class="a" style="left:1434.3px;top:816.8px;width:88.7px;height:11.8px;background:#454545"></div>
<div class="a" style="left:1523.5px;top:817px;width:41px;height:11.6px;background:#353535"></div>
<div class="t" style="left:1388.8px;top:820.9px;font-size:7.2px;color:#dcdcdc">Components</div>
<div class="t" style="left:1438.6px;top:820.9px;font-size:7.2px;color:#f4f4f4">Manufacturer Part Search</div>
<div class="t" style="left:1528px;top:820.9px;font-size:7.2px;color:#dcdcdc">Properties</div>
<svg style="left:1460px;top:250.5px" width="12" height="15" viewBox="0 0 12 15"><path d="M3.6,1.2 a1,1 0 0 1 2,0 v4.6 l1,-0.6 l0.9,0.4 l1,-0.3 l0.9,0.5 l0.9,0.1 v4 l-1.3,3.3 h-4.6 l-2.6,-3.6 l-1,-1.8 l1,-0.6 l1.8,1.8z" fill="#fff" stroke="#333" stroke-width="0.6"/></svg>
<div class="a" style="left:1572px;top:835.5px;width:26px;height:4px;background:#4c4c4c;border:1px solid #333"></div>
<div class="t" style="left:1577px;top:836.6px;font-size:7px;color:#ddd">Panels</div>
<div class="t" style="left:1470.5px;top:823.4px;font-family:'Liberation Mono',monospace;font-weight:bold;font-size:11.6px;color:#0c0c0c;text-shadow:0 0 0.8px #666">www.mfgrobots.com</div>
<svg style="left:0;top:0;opacity:0.94" width="320" height="839" viewBox="0 0 320 839"><defs>
<linearGradient id="lg1" x1="0" y1="0" x2="1" y2="1"><stop offset="0" stop-color="#5aa6d4"/><stop offset="0.35" stop-color="#3c86b6"/><stop offset="1" stop-color="#3a84b4"/></linearGradient>
<linearGradient id="lg2" x1="0" y1="0" x2="1" y2="1"><stop offset="0" stop-color="#4b9acb"/><stop offset="0.5" stop-color="#62acd6"/><stop offset="1" stop-color="#4592c2"/></linearGradient>
<linearGradient id="lg3" gradientUnits="userSpaceOnUse" x1="148" y1="718" x2="250" y2="758"><stop offset="0" stop-color="#4a9ccc"/><stop offset="0.3" stop-color="#2f79aa"/><stop offset="0.5" stop-color="#6fb4dc"/><stop offset="0.75" stop-color="#3a86b8"/><stop offset="1" stop-color="#5ca8d4"/></linearGradient>
<linearGradient id="lg4" gradientUnits="userSpaceOnUse" x1="113" y1="770" x2="298" y2="810"><stop offset="0" stop-color="#3f8fc0"/><stop offset="0.2" stop-color="#2c76a8"/><stop offset="0.45" stop-color="#5ea8d4"/><stop offset="0.6" stop-color="#8cc4e4"/><stop offset="0.75" stop-color="#4a98c8"/><stop offset="1" stop-color="#3d8cc0"/></linearGradient>
<linearGradient id="lg5" x1="0" y1="0" x2="0" y2="1"><stop offset="0" stop-color="#3570b0"/><stop offset="1" stop-color="#3f8cc0"/></linearGradient>
</defs><path d="M12,715 h26 l17,20 h13.5 l17,-20 h25.5 v91.5 h-26 v-63 l-16.5,17 h-16 l-15,-17 v63 h-25.5z" fill="#262626" opacity="0.7" transform="translate(0.8,0.8)"/><rect x="12.9" y="716" width="24.3" height="89" fill="url(#lg1)"/><path d="M37,716 L55,737 H68.6 L85.8,716 V741 L68.6,759 H53 L37,741z" fill="url(#lg5)"/><path d="M39,720 h3 l3,3.5 v4 l3,3 M38.5,725 h2.5 l2.5,3 v4 l4,4.5 M43,719.5 l4,4.5 v3.5 l3,3.5 v4 M47.5,722.5 l2.5,3 v4 l3,3 M84,720 h-3 l-3,3.5 v4 l-3,3 M84.5,725 h-2.5 l-2.5,3 v4 l-4,4.5 M80,719.5 l-4,4.5 v3.5 l-3,3.5 v4 M75.5,722.5 l-2.5,3 v4 l-3,3 M45,745 l7,7 M47,743 l6,6 M77,745 l-7,7 M75,743 l-6,6" stroke="#8fc2ea" stroke-width="0.55" fill="none"/><rect x="54.8" y="737.5" width="12.6" height="17.3" fill="#3f7fb8" stroke="#1b3854" stroke-width="0.8"/><rect x="56.8" y="740" width="8.6" height="13" fill="#222328"/><ellipse cx="61" cy="752" rx="2.2" ry="1.4" fill="#4a3a2a"/><rect x="85.7" y="716" width="24.4" height="89" fill="url(#lg2)"/><text x="87.8" y="720.4" font-family="Liberation Mono" font-weight="bold" font-size="4.3" fill="#12324e" textLength="20" lengthAdjust="spacingAndGlyphs">00100100</text><text x="87.8" y="725.3" font-family="Liberation Mono" font-weight="bold" font-size="4.3" fill="#12324e" textLength="20" lengthAdjust="spacingAndGlyphs">01100010</text><text x="87.8" y="730.1" font-family="Liberation Mono" font-weight="bold" font-size="4.3" fill="#12324e" textLength="20" lengthAdjust="spacingAndGlyphs">01101101</text><text x="87.8" y="735.0" font-family="Liberation Mono" font-weight="bold" font-size="4.3" fill="#12324e" textLength="20" lengthAdjust="spacingAndGlyphs">00011101</text><text x="87.8" y="739.9" font-family="Liberation Mono" font-weight="bold" font-size="4.3" fill="#12324e" textLength="20" lengthAdjust="spacingAndGlyphs">10100110</text><text x="87.8" y="744.8" font-family="Liberation Mono" font-weight="bold" font-size="4.3" fill="#12324e" textLength="20" lengthAdjust="spacingAndGlyphs">11011111</text><text x="87.8" y="749.6" font-family="Liberation Mono" font-weight="bold" font-size="4.3" fill="#12324e" textLength="20" lengthAdjust="spacingAndGlyphs">00010011</text><text x="87.8" y="754.5" font-family="Liberation Mono" font-weight="bold" font-size="4.3" fill="#12324e" textLength="20" lengthAdjust="spacingAndGlyphs">00110001</text><text x="87.8" y="759.4" font-family="Liberation Mono" font-weight="bold" font-size="4.3" fill="#12324e" textLength="20" lengthAdjust="spacingAndGlyphs">10110000</text><text x="87.8" y="764.2" font-family="Liberation Mono" font-weight="bold" font-size="4.3" fill="#12324e" textLength="20" lengthAdjust="spacingAndGlyphs">11111000</text><text x="87.8" y="769.1" font-family="Liberation Mono" font-weight="bold" font-size="4.3" fill="#12324e" textLength="20" lengthAdjust="spacingAndGlyphs">01001001</text><text x="87.8" y="774.0" font-family="Liberation Mono" font-weight="bold" font-size="4.3" fill="#12324e" textLength="20" lengthAdjust="spacingAndGlyphs">00001110</text><text x="87.8" y="778.8" font-family="Liberation Mono" font-weight="bold" font-size="4.3" fill="#12324e" textLength="20" lengthAdjust="spacingAndGlyphs">10110001</text><text x="87.8" y="783.7" font-family="Liberation Mono" font-weight="bold" font-size="4.3" fill="#12324e" textLength="20" lengthAdjust="spacingAndGlyphs">11101100</text><text x="87.8" y="788.6" font-family="Liberation Mono" font-weight="bold" font-size="4.3" fill="#12324e" textLength="20" lengthAdjust="spacingAndGlyphs">00110101</text><text x="87.8" y="793.4" font-family="Liberation Mono" font-weight="bold" font-size="4.3" fill="#12324e" textLength="20" lengthAdjust="spacingAndGlyphs">10110010</text><text x="87.8" y="798.3" font-family="Liberation Mono" font-weight="bold" font-size="4.3" fill="#12324e" textLength="20" lengthAdjust="spacingAndGlyphs">00110010</text><text x="87.8" y="803.2" font-family="Liberation Mono" font-weight="bold" font-size="4.3" fill="#12324e" textLength="20" lengthAdjust="spacingAndGlyphs">10110010</text><rect x="24.3" y="719" width="1.4" height="9" fill="#3a3a3a"/><rect x="26" y="724" width="8" height="1" fill="#cfd6dc"/><rect x="19.3" y="727" width="11.4" height="17" fill="#8a7f6a"/><rect x="21" y="729" width="3" height="14" fill="#d9c9a0"/><rect x="25.5" y="729" width="3.6" height="14" fill="#e8e0c4"/><rect x="22.8" y="742" width="4.5" height="9" fill="#e6e0cc"/><circle cx="24.7" cy="760" r="9.2" fill="#b6ad97" stroke="#8a826e" stroke-width="0.8"/><circle cx="24.7" cy="760" r="2.2" fill="#6d7f8c"/><path d="M22,753 a4,4 0 0 1 6,1" stroke="#eee8d8" stroke-width="1" fill="none"/><path d="M16.5,765.5 l5.5,17.5 M33.5,765 l-3,17" stroke="#1e1e1e" stroke-width="1.1"/><circle cx="26.3" cy="785" r="5.3" fill="#9a927e" stroke="#2a2a2a" stroke-width="1.3"/><circle cx="19.5" cy="795.8" r="2.9" fill="#7f8f9a" stroke="#56656f" stroke-width="0.9"/><text transform="translate(147.92,753.2) scale(0.5761,1)" font-family="Liberation Sans" font-weight="bold" font-size="44.6" vector-effect="non-scaling-stroke" stroke-linejoin="miter" fill="#1c405c" stroke="#1c405c" stroke-width="3.7">H</text><text transform="translate(168.02,753.4) scale(0.5851,1)" font-family="Liberation Sans" font-weight="bold" font-size="48" vector-effect="non-scaling-stroke" stroke-linejoin="miter" fill="#1c405c" stroke="#1c405c" stroke-width="3.7">o</text><text transform="translate(187.21,753.2) scale(0.6582,1)" font-family="Liberation Sans" font-weight="bold" font-size="48" vector-effect="non-scaling-stroke" stroke-linejoin="miter" fill="#1c405c" stroke="#1c405c" stroke-width="3.7">w</text><text transform="translate(219.99,753.2) scale(0.5438,1)" font-family="Liberation Sans" font-weight="bold" font-size="44.6" vector-effect="non-scaling-stroke" stroke-linejoin="miter" fill="#1c405c" stroke="#1c405c" stroke-width="3.7">T</text><text transform="translate(234.70,753.4) scale(0.5455,1)" font-family="Liberation Sans" font-weight="bold" font-size="48" vector-effect="non-scaling-stroke" stroke-linejoin="miter" fill="#1c405c" stroke="#1c405c" stroke-width="3.7">o</text><text transform="translate(112.69,804.2) scale(0.6275,1)" font-family="Liberation Sans" font-weight="bold" font-size="41.6" vector-effect="non-scaling-stroke" stroke-linejoin="miter" fill="#1c405c" stroke="#1c405c" stroke-width="3.3">E</text><text transform="translate(131.19,804.2) scale(0.5291,1)" font-family="Liberation Sans" font-weight="bold" font-size="41.6" vector-effect="non-scaling-stroke" stroke-linejoin="miter" fill="#1c405c" stroke="#1c405c" stroke-width="3.3">C</text><text transform="translate(147.79,804.2) scale(0.5968,1)" font-family="Liberation Sans" font-weight="bold" font-size="41.6" vector-effect="non-scaling-stroke" stroke-linejoin="miter" fill="#1c405c" stroke="#1c405c" stroke-width="3.3">H</text><text transform="translate(167.30,804.2) scale(0.4861,1)" font-family="Liberation Sans" font-weight="bold" font-size="41.6" vector-effect="non-scaling-stroke" stroke-linejoin="miter" fill="#1c405c" stroke="#1c405c" stroke-width="3.3">A</text><text transform="translate(184.86,804.2) scale(0.5027,1)" font-family="Liberation Sans" font-weight="bold" font-size="41.6" vector-effect="non-scaling-stroke" stroke-linejoin="miter" fill="#1c405c" stroke="#1c405c" stroke-width="3.3">T</text><text transform="translate(198.95,804.2) scale(0.5427,1)" font-family="Liberation Sans" font-weight="bold" font-size="41.6" vector-effect="non-scaling-stroke" stroke-linejoin="miter" fill="#1c405c" stroke="#1c405c" stroke-width="3.3">R</text><text transform="translate(217.26,804.2) scale(0.5156,1)" font-family="Liberation Sans" font-weight="bold" font-size="41.6" vector-effect="non-scaling-stroke" stroke-linejoin="miter" fill="#1c405c" stroke="#1c405c" stroke-width="3.3">O</text><text transform="translate(234.47,804.2) scale(0.6343,1)" font-family="Liberation Sans" font-weight="bold" font-size="41.6" vector-effect="non-scaling-stroke" stroke-linejoin="miter" fill="#1c405c" stroke="#1c405c" stroke-width="3.3">N</text><text transform="translate(252.53,804.2) scale(0.9295,1)" font-family="Liberation Sans" font-weight="bold" font-size="41.6" vector-effect="non-scaling-stroke" stroke-linejoin="miter" fill="#1c405c" stroke="#1c405c" stroke-width="3.3">I</text><text transform="translate(263.14,804.2) scale(0.5518,1)" font-family="Liberation Sans" font-weight="bold" font-size="41.6" vector-effect="non-scaling-stroke" stroke-linejoin="miter" fill="#1c405c" stroke="#1c405c" stroke-width="3.3">C</text><text transform="translate(281.29,804.2) scale(0.5487,1)" font-family="Liberation Sans" font-weight="bold" font-size="41.6" vector-effect="non-scaling-stroke" stroke-linejoin="miter" fill="#1c405c" stroke="#1c405c" stroke-width="3.3">S</text><mask id="mk3" maskUnits="userSpaceOnUse" x="140" y="710" width="120" height="55"><text transform="translate(147.92,753.2) scale(0.5761,1)" font-family="Liberation Sans" font-weight="bold" font-size="44.6" vector-effect="non-scaling-stroke" stroke-linejoin="miter" fill="#fff" stroke="#fff" stroke-width="2.4">H</text><text transform="translate(168.02,753.4) scale(0.5851,1)" font-family="Liberation Sans" font-weight="bold" font-size="48" vector-effect="non-scaling-stroke" stroke-linejoin="miter" fill="#fff" stroke="#fff" stroke-width="2.4">o</text><text transform="translate(187.21,753.2) scale(0.6582,1)" font-family="Liberation Sans" font-weight="bold" font-size="48" vector-effect="non-scaling-stroke" stroke-linejoin="miter" fill="#fff" stroke="#fff" stroke-width="2.4">w</text><text transform="translate(219.99,753.2) scale(0.5438,1)" font-family="Liberation Sans" font-weight="bold" font-size="44.6" vector-effect="non-scaling-stroke" stroke-linejoin="miter" fill="#fff" stroke="#fff" stroke-width="2.4">T</text><text transform="translate(234.70,753.4) scale(0.5455,1)" font-family="Liberation Sans" font-weight="bold" font-size="48" vector-effect="non-scaling-stroke" stroke-linejoin="miter" fill="#fff" stroke="#fff" stroke-width="2.4">o</text></mask><mask id="mk4" maskUnits="userSpaceOnUse" x="105" y="765" width="200" height="50"><text transform="translate(112.69,804.2) scale(0.6275,1)" font-family="Liberation Sans" font-weight="bold" font-size="41.6" vector-effect="non-scaling-stroke" stroke-linejoin="miter" fill="#fff" stroke="#fff" stroke-width="2.0">E</text><text transform="translate(131.19,804.2) scale(0.5291,1)" font-family="Liberation Sans" font-weight="bold" font-size="41.6" vector-effect="non-scaling-stroke" stroke-linejoin="miter" fill="#fff" stroke="#fff" stroke-width="2.0">C</text><text transform="translate(147.79,804.2) scale(0.5968,1)" font-family="Liberation Sans" font-weight="bold" font-size="41.6" vector-effect="non-scaling-stroke" stroke-linejoin="miter" fill="#fff" stroke="#fff" stroke-width="2.0">H</text><text transform="translate(167.30,804.2) scale(0.4861,1)" font-family="Liberation Sans" font-weight="bold" font-size="41.6" vector-effect="non-scaling-stroke" stroke-linejoin="miter" fill="#fff" stroke="#fff" stroke-width="2.0">A</text><text transform="translate(184.86,804.2) scale(0.5027,1)" font-family="Liberation Sans" font-weight="bold" font-size="41.6" vector-effect="non-scaling-stroke" stroke-linejoin="miter" fill="#fff" stroke="#fff" stroke-width="2.0">T</text><text transform="translate(198.95,804.2) scale(0.5427,1)" font-family="Liberation Sans" font-weight="bold" font-size="41.6" vector-effect="non-scaling-stroke" stroke-linejoin="miter" fill="#fff" stroke="#fff" stroke-width="2.0">R</text><text transform="translate(217.26,804.2) scale(0.5156,1)" font-family="Liberation Sans" font-weight="bold" font-size="41.6" vector-effect="non-scaling-stroke" stroke-linejoin="miter" fill="#fff" stroke="#fff" stroke-width="2.0">O</text><text transform="translate(234.47,804.2) scale(0.6343,1)" font-family="Liberation Sans" font-weight="bold" font-size="41.6" vector-effect="non-scaling-stroke" stroke-linejoin="miter" fill="#fff" stroke="#fff" stroke-width="2.0">N</text><text transform="translate(252.53,804.2) scale(0.9295,1)" font-family="Liberation Sans" font-weight="bold" font-size="41.6" vector-effect="non-scaling-stroke" stroke-linejoin="miter" fill="#fff" stroke="#fff" stroke-width="2.0">I</text><text transform="translate(263.14,804.2) scale(0.5518,1)" font-family="Liberation Sans" font-weight="bold" font-size="41.6" vector-effect="non-scaling-stroke" stroke-linejoin="miter" fill="#fff" stroke="#fff" stroke-width="2.0">C</text><text transform="translate(281.29,804.2) scale(0.5487,1)" font-family="Liberation Sans" font-weight="bold" font-size="41.6" vector-effect="non-scaling-stroke" stroke-linejoin="miter" fill="#fff" stroke="#fff" stroke-width="2.0">S</text></mask><rect x="140" y="710" width="120" height="55" fill="url(#lg3)" mask="url(#mk3)"/><rect x="105" y="765" width="200" height="50" fill="url(#lg4)" mask="url(#mk4)"/></svg>
<div class="t" style="left:14.6px;top:812.2px;font-family:'Liberation Mono',monospace;font-size:18.97px;color:#1a1a1a;text-shadow:0 0 0.8px #555">www.HowToMechatronics.com</div>
</body></html>
